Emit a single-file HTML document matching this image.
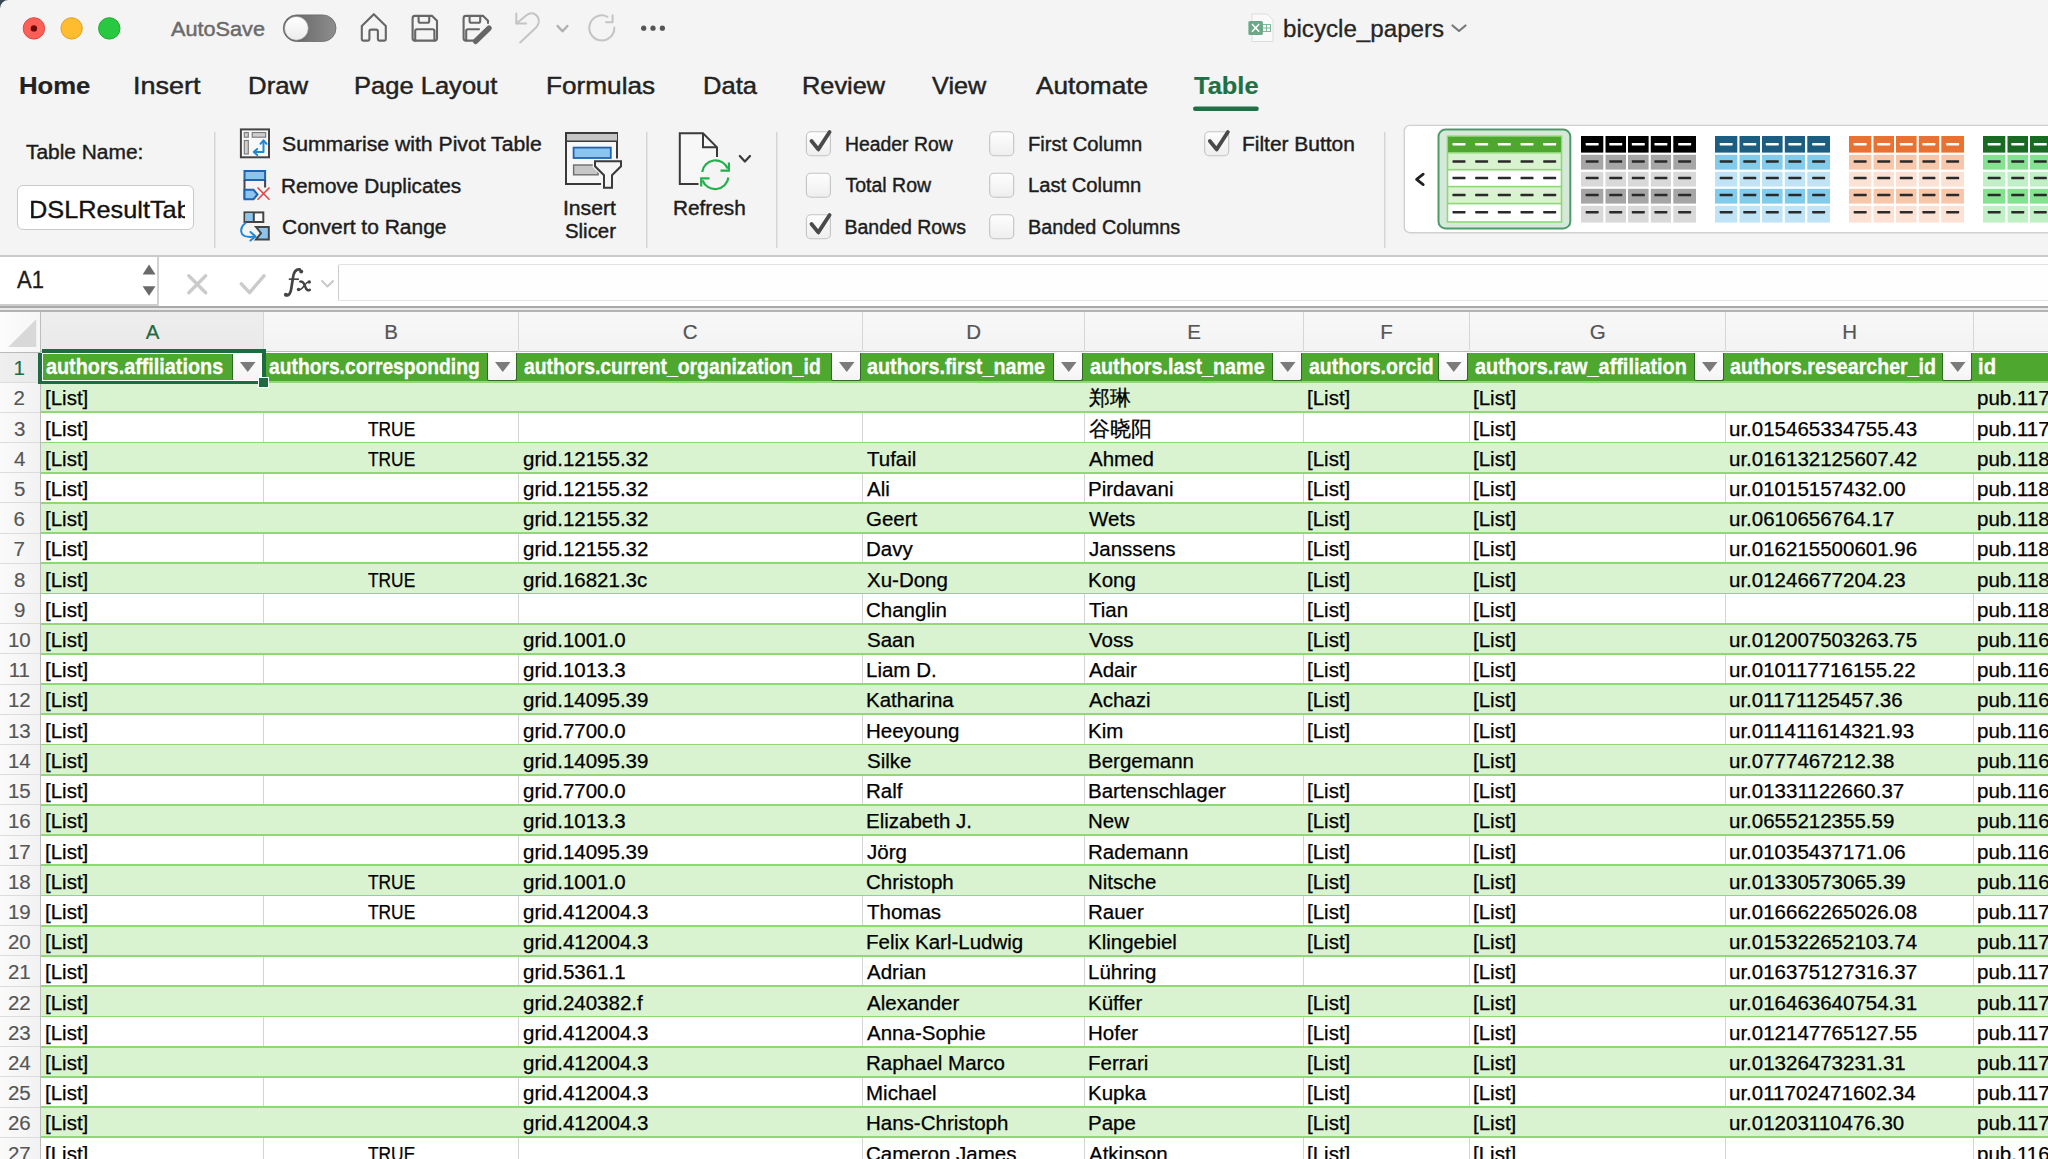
<!DOCTYPE html><html><head><meta charset="utf-8"><style>
*{margin:0;padding:0;box-sizing:border-box}
html,body{width:2048px;height:1159px;overflow:hidden;background:#f4f4f4;font-family:"Liberation Sans",sans-serif;}
.a{position:absolute}
.t{position:absolute;white-space:nowrap;line-height:1;transform-origin:0 0}
</style></head><body>

<div class="a" style="left:0;top:255px;width:2048px;height:2px;background:#cacaca"></div>
<div class="a" style="left:0;top:257px;width:2048px;height:49px;background:#fff"></div>
<div class="a" style="left:0;top:304px;width:157px;height:2px;background:#cdcdcd"></div>
<div class="a" style="left:157px;top:257px;width:2px;height:49px;background:#d2d2d2"></div>
<div class="a" style="left:0;top:306px;width:2048px;height:1.5px;background:#a9a9a9"></div>
<div class="a" style="left:0;top:307.5px;width:2048px;height:2px;background:#e9e9e9"></div>
<div class="a" style="left:0;top:309.5px;width:2048px;height:2px;background:#b3b3b3"></div>
<div class="a" style="left:338.2px;top:263.5px;width:1720px;height:37.5px;border-top:1px solid #e2e2e2;border-bottom:1px solid #e2e2e2;border-left:1.6px solid #cdcdcd;border-radius:2px 0 0 2px;background:#fefefe"></div>
<div class="a" style="left:0;top:311.5px;width:2048px;height:40px;background:linear-gradient(#f8f8f8,#f3f3f3)"></div>
<div class="a" style="left:41px;top:311.5px;width:222px;height:40px;background:linear-gradient(#eeeeee,#e9e9e9)"></div>
<div class="a" style="left:0;top:351.2px;width:2048px;height:1.6px;background:#bababa"></div>
<div class="a" style="left:41px;top:352px;width:2007px;height:807px;background:#fff"></div>
<div class="a" style="left:0;top:311.5px;width:40px;height:40px;background:linear-gradient(90deg,#fcfcfc,#f6f6f6)"></div>
<div class="a" style="left:0;top:352.8px;width:40px;height:807px;background:linear-gradient(90deg,#fafafa,#f2f2f2)"></div>
<div class="a" style="left:0;top:352.8px;width:40px;height:29.2px;background:linear-gradient(90deg,#efefef,#e9e9e9)"></div>
<div class="a" style="left:40px;top:311.5px;width:1.2px;height:848px;background:#bdbdbd"></div>
<svg class="a" style="left:0;top:311px" width="40" height="40"><polygon points="8.3,36 36.2,36 36.2,8.3" fill="#d8d8d8"/></svg>
<div class="a" style="left:262.5px;top:311.5px;width:1px;height:40px;background:#d6d6d6"></div>
<div class="a" style="left:517.5px;top:311.5px;width:1px;height:40px;background:#d6d6d6"></div>
<div class="a" style="left:861.5px;top:311.5px;width:1px;height:40px;background:#d6d6d6"></div>
<div class="a" style="left:1083.5px;top:311.5px;width:1px;height:40px;background:#d6d6d6"></div>
<div class="a" style="left:1302.5px;top:311.5px;width:1px;height:40px;background:#d6d6d6"></div>
<div class="a" style="left:1468.5px;top:311.5px;width:1px;height:40px;background:#d6d6d6"></div>
<div class="a" style="left:1724.5px;top:311.5px;width:1px;height:40px;background:#d6d6d6"></div>
<div class="a" style="left:1972.5px;top:311.5px;width:1px;height:40px;background:#d6d6d6"></div>
<div class="a" style="left:41px;top:382.00px;width:2007px;height:30.21px;background:#d9f2d0"></div>
<div class="a" style="left:262.5px;top:412.21px;width:1px;height:30.21px;background:#d4d4d4"></div>
<div class="a" style="left:517.5px;top:412.21px;width:1px;height:30.21px;background:#d4d4d4"></div>
<div class="a" style="left:861.5px;top:412.21px;width:1px;height:30.21px;background:#d4d4d4"></div>
<div class="a" style="left:1083.5px;top:412.21px;width:1px;height:30.21px;background:#d4d4d4"></div>
<div class="a" style="left:1302.5px;top:412.21px;width:1px;height:30.21px;background:#d4d4d4"></div>
<div class="a" style="left:1468.5px;top:412.21px;width:1px;height:30.21px;background:#d4d4d4"></div>
<div class="a" style="left:1724.5px;top:412.21px;width:1px;height:30.21px;background:#d4d4d4"></div>
<div class="a" style="left:1972.5px;top:412.21px;width:1px;height:30.21px;background:#d4d4d4"></div>
<div class="a" style="left:41px;top:442.42px;width:2007px;height:30.21px;background:#d9f2d0"></div>
<div class="a" style="left:262.5px;top:472.63px;width:1px;height:30.21px;background:#d4d4d4"></div>
<div class="a" style="left:517.5px;top:472.63px;width:1px;height:30.21px;background:#d4d4d4"></div>
<div class="a" style="left:861.5px;top:472.63px;width:1px;height:30.21px;background:#d4d4d4"></div>
<div class="a" style="left:1083.5px;top:472.63px;width:1px;height:30.21px;background:#d4d4d4"></div>
<div class="a" style="left:1302.5px;top:472.63px;width:1px;height:30.21px;background:#d4d4d4"></div>
<div class="a" style="left:1468.5px;top:472.63px;width:1px;height:30.21px;background:#d4d4d4"></div>
<div class="a" style="left:1724.5px;top:472.63px;width:1px;height:30.21px;background:#d4d4d4"></div>
<div class="a" style="left:1972.5px;top:472.63px;width:1px;height:30.21px;background:#d4d4d4"></div>
<div class="a" style="left:41px;top:502.84px;width:2007px;height:30.21px;background:#d9f2d0"></div>
<div class="a" style="left:262.5px;top:533.05px;width:1px;height:30.21px;background:#d4d4d4"></div>
<div class="a" style="left:517.5px;top:533.05px;width:1px;height:30.21px;background:#d4d4d4"></div>
<div class="a" style="left:861.5px;top:533.05px;width:1px;height:30.21px;background:#d4d4d4"></div>
<div class="a" style="left:1083.5px;top:533.05px;width:1px;height:30.21px;background:#d4d4d4"></div>
<div class="a" style="left:1302.5px;top:533.05px;width:1px;height:30.21px;background:#d4d4d4"></div>
<div class="a" style="left:1468.5px;top:533.05px;width:1px;height:30.21px;background:#d4d4d4"></div>
<div class="a" style="left:1724.5px;top:533.05px;width:1px;height:30.21px;background:#d4d4d4"></div>
<div class="a" style="left:1972.5px;top:533.05px;width:1px;height:30.21px;background:#d4d4d4"></div>
<div class="a" style="left:41px;top:563.26px;width:2007px;height:30.21px;background:#d9f2d0"></div>
<div class="a" style="left:262.5px;top:593.47px;width:1px;height:30.21px;background:#d4d4d4"></div>
<div class="a" style="left:517.5px;top:593.47px;width:1px;height:30.21px;background:#d4d4d4"></div>
<div class="a" style="left:861.5px;top:593.47px;width:1px;height:30.21px;background:#d4d4d4"></div>
<div class="a" style="left:1083.5px;top:593.47px;width:1px;height:30.21px;background:#d4d4d4"></div>
<div class="a" style="left:1302.5px;top:593.47px;width:1px;height:30.21px;background:#d4d4d4"></div>
<div class="a" style="left:1468.5px;top:593.47px;width:1px;height:30.21px;background:#d4d4d4"></div>
<div class="a" style="left:1724.5px;top:593.47px;width:1px;height:30.21px;background:#d4d4d4"></div>
<div class="a" style="left:1972.5px;top:593.47px;width:1px;height:30.21px;background:#d4d4d4"></div>
<div class="a" style="left:41px;top:623.68px;width:2007px;height:30.21px;background:#d9f2d0"></div>
<div class="a" style="left:262.5px;top:653.89px;width:1px;height:30.21px;background:#d4d4d4"></div>
<div class="a" style="left:517.5px;top:653.89px;width:1px;height:30.21px;background:#d4d4d4"></div>
<div class="a" style="left:861.5px;top:653.89px;width:1px;height:30.21px;background:#d4d4d4"></div>
<div class="a" style="left:1083.5px;top:653.89px;width:1px;height:30.21px;background:#d4d4d4"></div>
<div class="a" style="left:1302.5px;top:653.89px;width:1px;height:30.21px;background:#d4d4d4"></div>
<div class="a" style="left:1468.5px;top:653.89px;width:1px;height:30.21px;background:#d4d4d4"></div>
<div class="a" style="left:1724.5px;top:653.89px;width:1px;height:30.21px;background:#d4d4d4"></div>
<div class="a" style="left:1972.5px;top:653.89px;width:1px;height:30.21px;background:#d4d4d4"></div>
<div class="a" style="left:41px;top:684.10px;width:2007px;height:30.21px;background:#d9f2d0"></div>
<div class="a" style="left:262.5px;top:714.31px;width:1px;height:30.21px;background:#d4d4d4"></div>
<div class="a" style="left:517.5px;top:714.31px;width:1px;height:30.21px;background:#d4d4d4"></div>
<div class="a" style="left:861.5px;top:714.31px;width:1px;height:30.21px;background:#d4d4d4"></div>
<div class="a" style="left:1083.5px;top:714.31px;width:1px;height:30.21px;background:#d4d4d4"></div>
<div class="a" style="left:1302.5px;top:714.31px;width:1px;height:30.21px;background:#d4d4d4"></div>
<div class="a" style="left:1468.5px;top:714.31px;width:1px;height:30.21px;background:#d4d4d4"></div>
<div class="a" style="left:1724.5px;top:714.31px;width:1px;height:30.21px;background:#d4d4d4"></div>
<div class="a" style="left:1972.5px;top:714.31px;width:1px;height:30.21px;background:#d4d4d4"></div>
<div class="a" style="left:41px;top:744.52px;width:2007px;height:30.21px;background:#d9f2d0"></div>
<div class="a" style="left:262.5px;top:774.73px;width:1px;height:30.21px;background:#d4d4d4"></div>
<div class="a" style="left:517.5px;top:774.73px;width:1px;height:30.21px;background:#d4d4d4"></div>
<div class="a" style="left:861.5px;top:774.73px;width:1px;height:30.21px;background:#d4d4d4"></div>
<div class="a" style="left:1083.5px;top:774.73px;width:1px;height:30.21px;background:#d4d4d4"></div>
<div class="a" style="left:1302.5px;top:774.73px;width:1px;height:30.21px;background:#d4d4d4"></div>
<div class="a" style="left:1468.5px;top:774.73px;width:1px;height:30.21px;background:#d4d4d4"></div>
<div class="a" style="left:1724.5px;top:774.73px;width:1px;height:30.21px;background:#d4d4d4"></div>
<div class="a" style="left:1972.5px;top:774.73px;width:1px;height:30.21px;background:#d4d4d4"></div>
<div class="a" style="left:41px;top:804.94px;width:2007px;height:30.21px;background:#d9f2d0"></div>
<div class="a" style="left:262.5px;top:835.15px;width:1px;height:30.21px;background:#d4d4d4"></div>
<div class="a" style="left:517.5px;top:835.15px;width:1px;height:30.21px;background:#d4d4d4"></div>
<div class="a" style="left:861.5px;top:835.15px;width:1px;height:30.21px;background:#d4d4d4"></div>
<div class="a" style="left:1083.5px;top:835.15px;width:1px;height:30.21px;background:#d4d4d4"></div>
<div class="a" style="left:1302.5px;top:835.15px;width:1px;height:30.21px;background:#d4d4d4"></div>
<div class="a" style="left:1468.5px;top:835.15px;width:1px;height:30.21px;background:#d4d4d4"></div>
<div class="a" style="left:1724.5px;top:835.15px;width:1px;height:30.21px;background:#d4d4d4"></div>
<div class="a" style="left:1972.5px;top:835.15px;width:1px;height:30.21px;background:#d4d4d4"></div>
<div class="a" style="left:41px;top:865.36px;width:2007px;height:30.21px;background:#d9f2d0"></div>
<div class="a" style="left:262.5px;top:895.57px;width:1px;height:30.21px;background:#d4d4d4"></div>
<div class="a" style="left:517.5px;top:895.57px;width:1px;height:30.21px;background:#d4d4d4"></div>
<div class="a" style="left:861.5px;top:895.57px;width:1px;height:30.21px;background:#d4d4d4"></div>
<div class="a" style="left:1083.5px;top:895.57px;width:1px;height:30.21px;background:#d4d4d4"></div>
<div class="a" style="left:1302.5px;top:895.57px;width:1px;height:30.21px;background:#d4d4d4"></div>
<div class="a" style="left:1468.5px;top:895.57px;width:1px;height:30.21px;background:#d4d4d4"></div>
<div class="a" style="left:1724.5px;top:895.57px;width:1px;height:30.21px;background:#d4d4d4"></div>
<div class="a" style="left:1972.5px;top:895.57px;width:1px;height:30.21px;background:#d4d4d4"></div>
<div class="a" style="left:41px;top:925.78px;width:2007px;height:30.21px;background:#d9f2d0"></div>
<div class="a" style="left:262.5px;top:955.99px;width:1px;height:30.21px;background:#d4d4d4"></div>
<div class="a" style="left:517.5px;top:955.99px;width:1px;height:30.21px;background:#d4d4d4"></div>
<div class="a" style="left:861.5px;top:955.99px;width:1px;height:30.21px;background:#d4d4d4"></div>
<div class="a" style="left:1083.5px;top:955.99px;width:1px;height:30.21px;background:#d4d4d4"></div>
<div class="a" style="left:1302.5px;top:955.99px;width:1px;height:30.21px;background:#d4d4d4"></div>
<div class="a" style="left:1468.5px;top:955.99px;width:1px;height:30.21px;background:#d4d4d4"></div>
<div class="a" style="left:1724.5px;top:955.99px;width:1px;height:30.21px;background:#d4d4d4"></div>
<div class="a" style="left:1972.5px;top:955.99px;width:1px;height:30.21px;background:#d4d4d4"></div>
<div class="a" style="left:41px;top:986.20px;width:2007px;height:30.21px;background:#d9f2d0"></div>
<div class="a" style="left:262.5px;top:1016.41px;width:1px;height:30.21px;background:#d4d4d4"></div>
<div class="a" style="left:517.5px;top:1016.41px;width:1px;height:30.21px;background:#d4d4d4"></div>
<div class="a" style="left:861.5px;top:1016.41px;width:1px;height:30.21px;background:#d4d4d4"></div>
<div class="a" style="left:1083.5px;top:1016.41px;width:1px;height:30.21px;background:#d4d4d4"></div>
<div class="a" style="left:1302.5px;top:1016.41px;width:1px;height:30.21px;background:#d4d4d4"></div>
<div class="a" style="left:1468.5px;top:1016.41px;width:1px;height:30.21px;background:#d4d4d4"></div>
<div class="a" style="left:1724.5px;top:1016.41px;width:1px;height:30.21px;background:#d4d4d4"></div>
<div class="a" style="left:1972.5px;top:1016.41px;width:1px;height:30.21px;background:#d4d4d4"></div>
<div class="a" style="left:41px;top:1046.62px;width:2007px;height:30.21px;background:#d9f2d0"></div>
<div class="a" style="left:262.5px;top:1076.83px;width:1px;height:30.21px;background:#d4d4d4"></div>
<div class="a" style="left:517.5px;top:1076.83px;width:1px;height:30.21px;background:#d4d4d4"></div>
<div class="a" style="left:861.5px;top:1076.83px;width:1px;height:30.21px;background:#d4d4d4"></div>
<div class="a" style="left:1083.5px;top:1076.83px;width:1px;height:30.21px;background:#d4d4d4"></div>
<div class="a" style="left:1302.5px;top:1076.83px;width:1px;height:30.21px;background:#d4d4d4"></div>
<div class="a" style="left:1468.5px;top:1076.83px;width:1px;height:30.21px;background:#d4d4d4"></div>
<div class="a" style="left:1724.5px;top:1076.83px;width:1px;height:30.21px;background:#d4d4d4"></div>
<div class="a" style="left:1972.5px;top:1076.83px;width:1px;height:30.21px;background:#d4d4d4"></div>
<div class="a" style="left:41px;top:1107.04px;width:2007px;height:30.21px;background:#d9f2d0"></div>
<div class="a" style="left:262.5px;top:1137.25px;width:1px;height:30.21px;background:#d4d4d4"></div>
<div class="a" style="left:517.5px;top:1137.25px;width:1px;height:30.21px;background:#d4d4d4"></div>
<div class="a" style="left:861.5px;top:1137.25px;width:1px;height:30.21px;background:#d4d4d4"></div>
<div class="a" style="left:1083.5px;top:1137.25px;width:1px;height:30.21px;background:#d4d4d4"></div>
<div class="a" style="left:1302.5px;top:1137.25px;width:1px;height:30.21px;background:#d4d4d4"></div>
<div class="a" style="left:1468.5px;top:1137.25px;width:1px;height:30.21px;background:#d4d4d4"></div>
<div class="a" style="left:1724.5px;top:1137.25px;width:1px;height:30.21px;background:#d4d4d4"></div>
<div class="a" style="left:1972.5px;top:1137.25px;width:1px;height:30.21px;background:#d4d4d4"></div>
<div class="a" style="left:41px;top:411.31px;width:2007px;height:1.8px;background:#8ed973"></div>
<div class="a" style="left:0;top:411.71px;width:40px;height:1px;background:#dcdcdc"></div>
<div class="a" style="left:41px;top:441.52px;width:2007px;height:1.8px;background:#8ed973"></div>
<div class="a" style="left:0;top:441.92px;width:40px;height:1px;background:#dcdcdc"></div>
<div class="a" style="left:41px;top:471.73px;width:2007px;height:1.8px;background:#8ed973"></div>
<div class="a" style="left:0;top:472.13px;width:40px;height:1px;background:#dcdcdc"></div>
<div class="a" style="left:41px;top:501.94px;width:2007px;height:1.8px;background:#8ed973"></div>
<div class="a" style="left:0;top:502.34px;width:40px;height:1px;background:#dcdcdc"></div>
<div class="a" style="left:41px;top:532.15px;width:2007px;height:1.8px;background:#8ed973"></div>
<div class="a" style="left:0;top:532.55px;width:40px;height:1px;background:#dcdcdc"></div>
<div class="a" style="left:41px;top:562.36px;width:2007px;height:1.8px;background:#8ed973"></div>
<div class="a" style="left:0;top:562.76px;width:40px;height:1px;background:#dcdcdc"></div>
<div class="a" style="left:41px;top:592.57px;width:2007px;height:1.8px;background:#8ed973"></div>
<div class="a" style="left:0;top:592.97px;width:40px;height:1px;background:#dcdcdc"></div>
<div class="a" style="left:41px;top:622.78px;width:2007px;height:1.8px;background:#8ed973"></div>
<div class="a" style="left:0;top:623.18px;width:40px;height:1px;background:#dcdcdc"></div>
<div class="a" style="left:41px;top:652.99px;width:2007px;height:1.8px;background:#8ed973"></div>
<div class="a" style="left:0;top:653.39px;width:40px;height:1px;background:#dcdcdc"></div>
<div class="a" style="left:41px;top:683.20px;width:2007px;height:1.8px;background:#8ed973"></div>
<div class="a" style="left:0;top:683.60px;width:40px;height:1px;background:#dcdcdc"></div>
<div class="a" style="left:41px;top:713.41px;width:2007px;height:1.8px;background:#8ed973"></div>
<div class="a" style="left:0;top:713.81px;width:40px;height:1px;background:#dcdcdc"></div>
<div class="a" style="left:41px;top:743.62px;width:2007px;height:1.8px;background:#8ed973"></div>
<div class="a" style="left:0;top:744.02px;width:40px;height:1px;background:#dcdcdc"></div>
<div class="a" style="left:41px;top:773.83px;width:2007px;height:1.8px;background:#8ed973"></div>
<div class="a" style="left:0;top:774.23px;width:40px;height:1px;background:#dcdcdc"></div>
<div class="a" style="left:41px;top:804.04px;width:2007px;height:1.8px;background:#8ed973"></div>
<div class="a" style="left:0;top:804.44px;width:40px;height:1px;background:#dcdcdc"></div>
<div class="a" style="left:41px;top:834.25px;width:2007px;height:1.8px;background:#8ed973"></div>
<div class="a" style="left:0;top:834.65px;width:40px;height:1px;background:#dcdcdc"></div>
<div class="a" style="left:41px;top:864.46px;width:2007px;height:1.8px;background:#8ed973"></div>
<div class="a" style="left:0;top:864.86px;width:40px;height:1px;background:#dcdcdc"></div>
<div class="a" style="left:41px;top:894.67px;width:2007px;height:1.8px;background:#8ed973"></div>
<div class="a" style="left:0;top:895.07px;width:40px;height:1px;background:#dcdcdc"></div>
<div class="a" style="left:41px;top:924.88px;width:2007px;height:1.8px;background:#8ed973"></div>
<div class="a" style="left:0;top:925.28px;width:40px;height:1px;background:#dcdcdc"></div>
<div class="a" style="left:41px;top:955.09px;width:2007px;height:1.8px;background:#8ed973"></div>
<div class="a" style="left:0;top:955.49px;width:40px;height:1px;background:#dcdcdc"></div>
<div class="a" style="left:41px;top:985.30px;width:2007px;height:1.8px;background:#8ed973"></div>
<div class="a" style="left:0;top:985.70px;width:40px;height:1px;background:#dcdcdc"></div>
<div class="a" style="left:41px;top:1015.51px;width:2007px;height:1.8px;background:#8ed973"></div>
<div class="a" style="left:0;top:1015.91px;width:40px;height:1px;background:#dcdcdc"></div>
<div class="a" style="left:41px;top:1045.72px;width:2007px;height:1.8px;background:#8ed973"></div>
<div class="a" style="left:0;top:1046.12px;width:40px;height:1px;background:#dcdcdc"></div>
<div class="a" style="left:41px;top:1075.93px;width:2007px;height:1.8px;background:#8ed973"></div>
<div class="a" style="left:0;top:1076.33px;width:40px;height:1px;background:#dcdcdc"></div>
<div class="a" style="left:41px;top:1106.14px;width:2007px;height:1.8px;background:#8ed973"></div>
<div class="a" style="left:0;top:1106.54px;width:40px;height:1px;background:#dcdcdc"></div>
<div class="a" style="left:41px;top:1136.35px;width:2007px;height:1.8px;background:#8ed973"></div>
<div class="a" style="left:0;top:1136.75px;width:40px;height:1px;background:#dcdcdc"></div>
<div class="a" style="left:41px;top:1166.56px;width:2007px;height:1.8px;background:#8ed973"></div>
<div class="a" style="left:0;top:1166.96px;width:40px;height:1px;background:#dcdcdc"></div>
<div class="a" style="left:41px;top:352.8px;width:2007px;height:28.2px;background:#4ea72e"></div>
<div class="a" style="left:41px;top:380.5px;width:2007px;height:2px;background:#8ed973"></div>
<div class="a" style="left:0;top:381.5px;width:40px;height:1px;background:#dcdcdc"></div>
<div class="a" style="left:232.2px;top:352.8px;width:29.6px;height:28px;background:linear-gradient(#fff,#f4f4f4);border:1.7px solid #2e6a24;border-top:none;border-radius:0 0 2.5px 2.5px"></div>
<svg class="a" style="left:239.5px;top:362px" width="16" height="11"><polygon points="0,0 15.5,0 7.75,10" fill="#7b7b7b"/></svg>
<div class="a" style="left:487.2px;top:352.8px;width:29.6px;height:28px;background:linear-gradient(#fff,#f4f4f4);border:1.7px solid #2e6a24;border-top:none;border-radius:0 0 2.5px 2.5px"></div>
<svg class="a" style="left:494.5px;top:362px" width="16" height="11"><polygon points="0,0 15.5,0 7.75,10" fill="#7b7b7b"/></svg>
<div class="a" style="left:831.2px;top:352.8px;width:29.6px;height:28px;background:linear-gradient(#fff,#f4f4f4);border:1.7px solid #2e6a24;border-top:none;border-radius:0 0 2.5px 2.5px"></div>
<svg class="a" style="left:838.5px;top:362px" width="16" height="11"><polygon points="0,0 15.5,0 7.75,10" fill="#7b7b7b"/></svg>
<div class="a" style="left:1053.2px;top:352.8px;width:29.6px;height:28px;background:linear-gradient(#fff,#f4f4f4);border:1.7px solid #2e6a24;border-top:none;border-radius:0 0 2.5px 2.5px"></div>
<svg class="a" style="left:1060.5px;top:362px" width="16" height="11"><polygon points="0,0 15.5,0 7.75,10" fill="#7b7b7b"/></svg>
<div class="a" style="left:1272.2px;top:352.8px;width:29.6px;height:28px;background:linear-gradient(#fff,#f4f4f4);border:1.7px solid #2e6a24;border-top:none;border-radius:0 0 2.5px 2.5px"></div>
<svg class="a" style="left:1279.5px;top:362px" width="16" height="11"><polygon points="0,0 15.5,0 7.75,10" fill="#7b7b7b"/></svg>
<div class="a" style="left:1438.2px;top:352.8px;width:29.6px;height:28px;background:linear-gradient(#fff,#f4f4f4);border:1.7px solid #2e6a24;border-top:none;border-radius:0 0 2.5px 2.5px"></div>
<svg class="a" style="left:1445.5px;top:362px" width="16" height="11"><polygon points="0,0 15.5,0 7.75,10" fill="#7b7b7b"/></svg>
<div class="a" style="left:1694.2px;top:352.8px;width:29.6px;height:28px;background:linear-gradient(#fff,#f4f4f4);border:1.7px solid #2e6a24;border-top:none;border-radius:0 0 2.5px 2.5px"></div>
<svg class="a" style="left:1701.5px;top:362px" width="16" height="11"><polygon points="0,0 15.5,0 7.75,10" fill="#7b7b7b"/></svg>
<div class="a" style="left:1942.2px;top:352.8px;width:29.6px;height:28px;background:linear-gradient(#fff,#f4f4f4);border:1.7px solid #2e6a24;border-top:none;border-radius:0 0 2.5px 2.5px"></div>
<svg class="a" style="left:1949.5px;top:362px" width="16" height="11"><polygon points="0,0 15.5,0 7.75,10" fill="#7b7b7b"/></svg>
<!--TEXTS-->
<div class="t" style="left:170.60px;top:18.97px;font-size:20px;color:#6a6a6a;-webkit-text-stroke:0.45px #6a6a6a;transform:scaleX(1.0831);">AutoSave</div>
<div class="t" style="left:1283.35px;top:17.53px;font-size:23px;color:#262626;-webkit-text-stroke:0.3px #262626;transform:scaleX(1.0506);">bicycle_papers</div>
<div class="t" style="left:18.75px;top:73.76px;font-size:24.5px;font-weight:bold;color:#222;-webkit-text-stroke:0.2px #222;transform:scaleX(1.0490);">Home</div>
<div class="t" style="left:132.79px;top:73.76px;font-size:24.5px;color:#222;-webkit-text-stroke:0.45px #222;transform:scaleX(1.1031);">Insert</div>
<div class="t" style="left:248.09px;top:73.76px;font-size:24.5px;color:#222;-webkit-text-stroke:0.45px #222;transform:scaleX(1.0527);">Draw</div>
<div class="t" style="left:354.42px;top:73.76px;font-size:24.5px;color:#222;-webkit-text-stroke:0.45px #222;transform:scaleX(1.0421);">Page Layout</div>
<div class="t" style="left:546.36px;top:73.76px;font-size:24.5px;color:#222;-webkit-text-stroke:0.45px #222;transform:scaleX(1.0686);">Formulas</div>
<div class="t" style="left:703.01px;top:73.76px;font-size:24.5px;color:#222;-webkit-text-stroke:0.45px #222;transform:scaleX(1.0434);">Data</div>
<div class="t" style="left:801.53px;top:73.76px;font-size:24.5px;color:#222;-webkit-text-stroke:0.45px #222;transform:scaleX(1.0339);">Review</div>
<div class="t" style="left:932.40px;top:73.76px;font-size:24.5px;color:#222;-webkit-text-stroke:0.45px #222;transform:scaleX(1.0308);">View</div>
<div class="t" style="left:1035.60px;top:73.76px;font-size:24.5px;color:#222;-webkit-text-stroke:0.45px #222;transform:scaleX(1.0687);">Automate</div>
<div class="t" style="left:1193.90px;top:73.76px;font-size:24.5px;font-weight:bold;color:#1e7145;-webkit-text-stroke:0.2px #1e7145;transform:scaleX(1.0383);">Table</div>
<div class="t" style="left:25.50px;top:141.77px;font-size:20px;color:#1c1c1c;-webkit-text-stroke:0.4px #1c1c1c;transform:scaleX(1.0450);">Table Name:</div>
<div class="t" style="left:282.00px;top:134.99px;font-size:19.5px;color:#1c1c1c;-webkit-text-stroke:0.4px #1c1c1c;transform:scaleX(1.0861);">Summarise with Pivot Table</div>
<div class="t" style="left:281.43px;top:176.79px;font-size:19.5px;color:#1c1c1c;-webkit-text-stroke:0.4px #1c1c1c;transform:scaleX(1.0658);">Remove Duplicates</div>
<div class="t" style="left:282.00px;top:218.09px;font-size:19.5px;color:#1c1c1c;-webkit-text-stroke:0.4px #1c1c1c;transform:scaleX(1.0764);">Convert to Range</div>
<div class="t" style="left:563.12px;top:199.09px;font-size:19.5px;color:#1c1c1c;-webkit-text-stroke:0.4px #1c1c1c;transform:scaleX(1.0837);">Insert</div>
<div class="t" style="left:564.80px;top:221.59px;font-size:19.5px;color:#1c1c1c;-webkit-text-stroke:0.4px #1c1c1c;transform:scaleX(1.0453);">Slicer</div>
<div class="t" style="left:672.83px;top:199.09px;font-size:19.5px;color:#1c1c1c;-webkit-text-stroke:0.4px #1c1c1c;transform:scaleX(1.0657);">Refresh</div>
<div class="t" style="left:844.51px;top:134.59px;font-size:19.5px;color:#1c1c1c;-webkit-text-stroke:0.4px #1c1c1c;transform:scaleX(0.9935);">Header Row</div>
<div class="t" style="left:845.50px;top:176.39px;font-size:19.5px;color:#1c1c1c;-webkit-text-stroke:0.4px #1c1c1c;">Total Row</div>
<div class="t" style="left:844.50px;top:217.89px;font-size:19.5px;color:#1c1c1c;-webkit-text-stroke:0.4px #1c1c1c;">Banded Rows</div>
<div class="t" style="left:1027.57px;top:134.59px;font-size:19.5px;color:#1c1c1c;-webkit-text-stroke:0.4px #1c1c1c;transform:scaleX(1.0343);">First Column</div>
<div class="t" style="left:1027.56px;top:176.39px;font-size:19.5px;color:#1c1c1c;-webkit-text-stroke:0.4px #1c1c1c;transform:scaleX(1.0351);">Last Column</div>
<div class="t" style="left:1027.58px;top:217.89px;font-size:19.5px;color:#1c1c1c;-webkit-text-stroke:0.4px #1c1c1c;transform:scaleX(1.0172);">Banded Columns</div>
<div class="t" style="left:1242.43px;top:134.59px;font-size:19.5px;color:#1c1c1c;-webkit-text-stroke:0.4px #1c1c1c;transform:scaleX(1.0728);">Filter Button</div>
<div class="t" style="left:17.10px;top:269.33px;font-size:23px;color:#1c1c1c;-webkit-text-stroke:0.3px #1c1c1c;transform:scaleX(0.9546);">A1</div>
<div class="t" style="left:145.80px;top:322.35px;font-size:20.5px;color:#1d6b41;-webkit-text-stroke:0.2px #1d6b41;">A</div>
<div class="t" style="left:384.30px;top:322.35px;font-size:20.5px;color:#555;-webkit-text-stroke:0.2px #555;">B</div>
<div class="t" style="left:682.80px;top:322.35px;font-size:20.5px;color:#555;-webkit-text-stroke:0.2px #555;">C</div>
<div class="t" style="left:966.30px;top:322.35px;font-size:20.5px;color:#555;-webkit-text-stroke:0.2px #555;">D</div>
<div class="t" style="left:1187.30px;top:322.35px;font-size:20.5px;color:#555;-webkit-text-stroke:0.2px #555;">E</div>
<div class="t" style="left:1380.30px;top:322.35px;font-size:20.5px;color:#555;-webkit-text-stroke:0.2px #555;">F</div>
<div class="t" style="left:1589.80px;top:322.35px;font-size:20.5px;color:#555;-webkit-text-stroke:0.2px #555;">G</div>
<div class="t" style="left:1842.30px;top:322.35px;font-size:20.5px;color:#555;-webkit-text-stroke:0.2px #555;">H</div>
<div class="t" style="left:13.60px;top:357.95px;font-size:20.5px;color:#1d6b41;-webkit-text-stroke:0.15px #1d6b41;">1</div>
<div class="t" style="left:13.60px;top:388.35px;font-size:20.5px;color:#555;-webkit-text-stroke:0.15px #555;">2</div>
<div class="t" style="left:14.10px;top:418.56px;font-size:20.5px;color:#555;-webkit-text-stroke:0.15px #555;">3</div>
<div class="t" style="left:14.10px;top:448.77px;font-size:20.5px;color:#555;-webkit-text-stroke:0.15px #555;">4</div>
<div class="t" style="left:14.10px;top:478.98px;font-size:20.5px;color:#555;-webkit-text-stroke:0.15px #555;">5</div>
<div class="t" style="left:13.60px;top:509.19px;font-size:20.5px;color:#555;-webkit-text-stroke:0.15px #555;">6</div>
<div class="t" style="left:13.60px;top:539.40px;font-size:20.5px;color:#555;-webkit-text-stroke:0.15px #555;">7</div>
<div class="t" style="left:14.10px;top:569.61px;font-size:20.5px;color:#555;-webkit-text-stroke:0.15px #555;">8</div>
<div class="t" style="left:14.10px;top:599.82px;font-size:20.5px;color:#555;-webkit-text-stroke:0.15px #555;">9</div>
<div class="t" style="left:7.90px;top:630.03px;font-size:20.5px;color:#555;-webkit-text-stroke:0.15px #555;">10</div>
<div class="t" style="left:8.66px;top:660.24px;font-size:20.5px;color:#555;-webkit-text-stroke:0.15px #555;">11</div>
<div class="t" style="left:7.90px;top:690.45px;font-size:20.5px;color:#555;-webkit-text-stroke:0.15px #555;">12</div>
<div class="t" style="left:7.90px;top:720.66px;font-size:20.5px;color:#555;-webkit-text-stroke:0.15px #555;">13</div>
<div class="t" style="left:7.90px;top:750.87px;font-size:20.5px;color:#555;-webkit-text-stroke:0.15px #555;">14</div>
<div class="t" style="left:7.90px;top:781.08px;font-size:20.5px;color:#555;-webkit-text-stroke:0.15px #555;">15</div>
<div class="t" style="left:7.90px;top:811.29px;font-size:20.5px;color:#555;-webkit-text-stroke:0.15px #555;">16</div>
<div class="t" style="left:7.90px;top:841.50px;font-size:20.5px;color:#555;-webkit-text-stroke:0.15px #555;">17</div>
<div class="t" style="left:7.90px;top:871.71px;font-size:20.5px;color:#555;-webkit-text-stroke:0.15px #555;">18</div>
<div class="t" style="left:7.90px;top:901.92px;font-size:20.5px;color:#555;-webkit-text-stroke:0.15px #555;">19</div>
<div class="t" style="left:7.90px;top:932.13px;font-size:20.5px;color:#555;-webkit-text-stroke:0.15px #555;">20</div>
<div class="t" style="left:7.90px;top:962.34px;font-size:20.5px;color:#555;-webkit-text-stroke:0.15px #555;">21</div>
<div class="t" style="left:7.90px;top:992.55px;font-size:20.5px;color:#555;-webkit-text-stroke:0.15px #555;">22</div>
<div class="t" style="left:7.90px;top:1022.76px;font-size:20.5px;color:#555;-webkit-text-stroke:0.15px #555;">23</div>
<div class="t" style="left:7.90px;top:1052.97px;font-size:20.5px;color:#555;-webkit-text-stroke:0.15px #555;">24</div>
<div class="t" style="left:7.90px;top:1083.18px;font-size:20.5px;color:#555;-webkit-text-stroke:0.15px #555;">25</div>
<div class="t" style="left:7.90px;top:1113.39px;font-size:20.5px;color:#555;-webkit-text-stroke:0.15px #555;">26</div>
<div class="t" style="left:7.90px;top:1143.60px;font-size:20.5px;color:#555;-webkit-text-stroke:0.15px #555;">27</div>
<div class="t" style="left:45.90px;top:357.20px;font-size:21.5px;font-weight:bold;color:#fff;-webkit-text-stroke:0.3px #fff;transform:scaleX(0.9212);">authors.affiliations</div>
<div class="t" style="left:268.90px;top:357.20px;font-size:21.5px;font-weight:bold;color:#fff;-webkit-text-stroke:0.3px #fff;transform:scaleX(0.8954);">authors.corresponding</div>
<div class="t" style="left:523.50px;top:357.20px;font-size:21.5px;font-weight:bold;color:#fff;-webkit-text-stroke:0.3px #fff;transform:scaleX(0.8999);">authors.current_organization_id</div>
<div class="t" style="left:867.00px;top:357.20px;font-size:21.5px;font-weight:bold;color:#fff;-webkit-text-stroke:0.3px #fff;transform:scaleX(0.9200);">authors.first_name</div>
<div class="t" style="left:1089.50px;top:357.20px;font-size:21.5px;font-weight:bold;color:#fff;-webkit-text-stroke:0.3px #fff;transform:scaleX(0.9193);">authors.last_name</div>
<div class="t" style="left:1308.70px;top:357.20px;font-size:21.5px;font-weight:bold;color:#fff;-webkit-text-stroke:0.3px #fff;transform:scaleX(0.9079);">authors.orcid</div>
<div class="t" style="left:1474.50px;top:357.20px;font-size:21.5px;font-weight:bold;color:#fff;-webkit-text-stroke:0.3px #fff;transform:scaleX(0.9236);">authors.raw_affiliation</div>
<div class="t" style="left:1729.60px;top:357.20px;font-size:21.5px;font-weight:bold;color:#fff;-webkit-text-stroke:0.3px #fff;transform:scaleX(0.9122);">authors.researcher_id</div>
<div class="t" style="left:1977.76px;top:357.20px;font-size:21.5px;font-weight:bold;color:#fff;-webkit-text-stroke:0.3px #fff;transform:scaleX(0.9427);">id</div>
<div class="t" style="left:45.00px;top:388.35px;font-size:20.5px;color:#000;-webkit-text-stroke:0.25px #000;">[List]</div>
<div class="t" style="left:1089.00px;top:388.35px;font-size:20.5px;color:#000;-webkit-text-stroke:0.25px #000;">郑琳</div>
<div class="t" style="left:1307.00px;top:388.35px;font-size:20.5px;color:#000;-webkit-text-stroke:0.25px #000;">[List]</div>
<div class="t" style="left:1473.00px;top:388.35px;font-size:20.5px;color:#000;-webkit-text-stroke:0.25px #000;">[List]</div>
<div class="t" style="left:1977.00px;top:388.35px;font-size:20.5px;color:#000;-webkit-text-stroke:0.25px #000;">pub.117</div>
<div class="t" style="left:45.00px;top:418.56px;font-size:20.5px;color:#000;-webkit-text-stroke:0.25px #000;">[List]</div>
<div class="t" style="left:368.00px;top:418.56px;font-size:20.5px;color:#000;-webkit-text-stroke:0.25px #000;transform:scaleX(0.8462);">TRUE</div>
<div class="t" style="left:1089.00px;top:418.56px;font-size:20.5px;color:#000;-webkit-text-stroke:0.25px #000;">谷晓阳</div>
<div class="t" style="left:1473.00px;top:418.56px;font-size:20.5px;color:#000;-webkit-text-stroke:0.25px #000;">[List]</div>
<div class="t" style="left:1729.00px;top:418.56px;font-size:20.5px;color:#000;-webkit-text-stroke:0.25px #000;">ur.015465334755.43</div>
<div class="t" style="left:1977.00px;top:418.56px;font-size:20.5px;color:#000;-webkit-text-stroke:0.25px #000;">pub.117</div>
<div class="t" style="left:45.00px;top:448.77px;font-size:20.5px;color:#000;-webkit-text-stroke:0.25px #000;">[List]</div>
<div class="t" style="left:368.00px;top:448.77px;font-size:20.5px;color:#000;-webkit-text-stroke:0.25px #000;transform:scaleX(0.8462);">TRUE</div>
<div class="t" style="left:523.00px;top:448.77px;font-size:20.5px;color:#000;-webkit-text-stroke:0.25px #000;">grid.12155.32</div>
<div class="t" style="left:867.00px;top:448.77px;font-size:20.5px;color:#000;-webkit-text-stroke:0.25px #000;">Tufail</div>
<div class="t" style="left:1089.00px;top:448.77px;font-size:20.5px;color:#000;-webkit-text-stroke:0.25px #000;">Ahmed</div>
<div class="t" style="left:1307.00px;top:448.77px;font-size:20.5px;color:#000;-webkit-text-stroke:0.25px #000;">[List]</div>
<div class="t" style="left:1473.00px;top:448.77px;font-size:20.5px;color:#000;-webkit-text-stroke:0.25px #000;">[List]</div>
<div class="t" style="left:1729.00px;top:448.77px;font-size:20.5px;color:#000;-webkit-text-stroke:0.25px #000;">ur.016132125607.42</div>
<div class="t" style="left:1977.00px;top:448.77px;font-size:20.5px;color:#000;-webkit-text-stroke:0.25px #000;">pub.118</div>
<div class="t" style="left:45.00px;top:478.98px;font-size:20.5px;color:#000;-webkit-text-stroke:0.25px #000;">[List]</div>
<div class="t" style="left:523.00px;top:478.98px;font-size:20.5px;color:#000;-webkit-text-stroke:0.25px #000;">grid.12155.32</div>
<div class="t" style="left:867.00px;top:478.98px;font-size:20.5px;color:#000;-webkit-text-stroke:0.25px #000;">Ali</div>
<div class="t" style="left:1088.00px;top:478.98px;font-size:20.5px;color:#000;-webkit-text-stroke:0.25px #000;">Pirdavani</div>
<div class="t" style="left:1307.00px;top:478.98px;font-size:20.5px;color:#000;-webkit-text-stroke:0.25px #000;">[List]</div>
<div class="t" style="left:1473.00px;top:478.98px;font-size:20.5px;color:#000;-webkit-text-stroke:0.25px #000;">[List]</div>
<div class="t" style="left:1729.00px;top:478.98px;font-size:20.5px;color:#000;-webkit-text-stroke:0.25px #000;">ur.01015157432.00</div>
<div class="t" style="left:1977.00px;top:478.98px;font-size:20.5px;color:#000;-webkit-text-stroke:0.25px #000;">pub.118</div>
<div class="t" style="left:45.00px;top:509.19px;font-size:20.5px;color:#000;-webkit-text-stroke:0.25px #000;">[List]</div>
<div class="t" style="left:523.00px;top:509.19px;font-size:20.5px;color:#000;-webkit-text-stroke:0.25px #000;">grid.12155.32</div>
<div class="t" style="left:866.00px;top:509.19px;font-size:20.5px;color:#000;-webkit-text-stroke:0.25px #000;">Geert</div>
<div class="t" style="left:1089.00px;top:509.19px;font-size:20.5px;color:#000;-webkit-text-stroke:0.25px #000;">Wets</div>
<div class="t" style="left:1307.00px;top:509.19px;font-size:20.5px;color:#000;-webkit-text-stroke:0.25px #000;">[List]</div>
<div class="t" style="left:1473.00px;top:509.19px;font-size:20.5px;color:#000;-webkit-text-stroke:0.25px #000;">[List]</div>
<div class="t" style="left:1729.00px;top:509.19px;font-size:20.5px;color:#000;-webkit-text-stroke:0.25px #000;">ur.0610656764.17</div>
<div class="t" style="left:1977.00px;top:509.19px;font-size:20.5px;color:#000;-webkit-text-stroke:0.25px #000;">pub.118</div>
<div class="t" style="left:45.00px;top:539.40px;font-size:20.5px;color:#000;-webkit-text-stroke:0.25px #000;">[List]</div>
<div class="t" style="left:523.00px;top:539.40px;font-size:20.5px;color:#000;-webkit-text-stroke:0.25px #000;">grid.12155.32</div>
<div class="t" style="left:866.00px;top:539.40px;font-size:20.5px;color:#000;-webkit-text-stroke:0.25px #000;">Davy</div>
<div class="t" style="left:1089.00px;top:539.40px;font-size:20.5px;color:#000;-webkit-text-stroke:0.25px #000;">Janssens</div>
<div class="t" style="left:1307.00px;top:539.40px;font-size:20.5px;color:#000;-webkit-text-stroke:0.25px #000;">[List]</div>
<div class="t" style="left:1473.00px;top:539.40px;font-size:20.5px;color:#000;-webkit-text-stroke:0.25px #000;">[List]</div>
<div class="t" style="left:1729.00px;top:539.40px;font-size:20.5px;color:#000;-webkit-text-stroke:0.25px #000;">ur.016215500601.96</div>
<div class="t" style="left:1977.00px;top:539.40px;font-size:20.5px;color:#000;-webkit-text-stroke:0.25px #000;">pub.118</div>
<div class="t" style="left:45.00px;top:569.61px;font-size:20.5px;color:#000;-webkit-text-stroke:0.25px #000;">[List]</div>
<div class="t" style="left:368.00px;top:569.61px;font-size:20.5px;color:#000;-webkit-text-stroke:0.25px #000;transform:scaleX(0.8462);">TRUE</div>
<div class="t" style="left:523.00px;top:569.61px;font-size:20.5px;color:#000;-webkit-text-stroke:0.25px #000;">grid.16821.3c</div>
<div class="t" style="left:867.00px;top:569.61px;font-size:20.5px;color:#000;-webkit-text-stroke:0.25px #000;">Xu-Dong</div>
<div class="t" style="left:1088.00px;top:569.61px;font-size:20.5px;color:#000;-webkit-text-stroke:0.25px #000;">Kong</div>
<div class="t" style="left:1307.00px;top:569.61px;font-size:20.5px;color:#000;-webkit-text-stroke:0.25px #000;">[List]</div>
<div class="t" style="left:1473.00px;top:569.61px;font-size:20.5px;color:#000;-webkit-text-stroke:0.25px #000;">[List]</div>
<div class="t" style="left:1729.00px;top:569.61px;font-size:20.5px;color:#000;-webkit-text-stroke:0.25px #000;">ur.01246677204.23</div>
<div class="t" style="left:1977.00px;top:569.61px;font-size:20.5px;color:#000;-webkit-text-stroke:0.25px #000;">pub.118</div>
<div class="t" style="left:45.00px;top:599.82px;font-size:20.5px;color:#000;-webkit-text-stroke:0.25px #000;">[List]</div>
<div class="t" style="left:866.00px;top:599.82px;font-size:20.5px;color:#000;-webkit-text-stroke:0.25px #000;">Changlin</div>
<div class="t" style="left:1089.00px;top:599.82px;font-size:20.5px;color:#000;-webkit-text-stroke:0.25px #000;">Tian</div>
<div class="t" style="left:1307.00px;top:599.82px;font-size:20.5px;color:#000;-webkit-text-stroke:0.25px #000;">[List]</div>
<div class="t" style="left:1473.00px;top:599.82px;font-size:20.5px;color:#000;-webkit-text-stroke:0.25px #000;">[List]</div>
<div class="t" style="left:1977.00px;top:599.82px;font-size:20.5px;color:#000;-webkit-text-stroke:0.25px #000;">pub.118</div>
<div class="t" style="left:45.00px;top:630.03px;font-size:20.5px;color:#000;-webkit-text-stroke:0.25px #000;">[List]</div>
<div class="t" style="left:523.00px;top:630.03px;font-size:20.5px;color:#000;-webkit-text-stroke:0.25px #000;">grid.1001.0</div>
<div class="t" style="left:867.00px;top:630.03px;font-size:20.5px;color:#000;-webkit-text-stroke:0.25px #000;">Saan</div>
<div class="t" style="left:1089.00px;top:630.03px;font-size:20.5px;color:#000;-webkit-text-stroke:0.25px #000;">Voss</div>
<div class="t" style="left:1307.00px;top:630.03px;font-size:20.5px;color:#000;-webkit-text-stroke:0.25px #000;">[List]</div>
<div class="t" style="left:1473.00px;top:630.03px;font-size:20.5px;color:#000;-webkit-text-stroke:0.25px #000;">[List]</div>
<div class="t" style="left:1729.00px;top:630.03px;font-size:20.5px;color:#000;-webkit-text-stroke:0.25px #000;">ur.012007503263.75</div>
<div class="t" style="left:1977.00px;top:630.03px;font-size:20.5px;color:#000;-webkit-text-stroke:0.25px #000;">pub.116</div>
<div class="t" style="left:45.00px;top:660.24px;font-size:20.5px;color:#000;-webkit-text-stroke:0.25px #000;">[List]</div>
<div class="t" style="left:523.00px;top:660.24px;font-size:20.5px;color:#000;-webkit-text-stroke:0.25px #000;">grid.1013.3</div>
<div class="t" style="left:866.00px;top:660.24px;font-size:20.5px;color:#000;-webkit-text-stroke:0.25px #000;">Liam D.</div>
<div class="t" style="left:1089.00px;top:660.24px;font-size:20.5px;color:#000;-webkit-text-stroke:0.25px #000;">Adair</div>
<div class="t" style="left:1307.00px;top:660.24px;font-size:20.5px;color:#000;-webkit-text-stroke:0.25px #000;">[List]</div>
<div class="t" style="left:1473.00px;top:660.24px;font-size:20.5px;color:#000;-webkit-text-stroke:0.25px #000;">[List]</div>
<div class="t" style="left:1729.00px;top:660.24px;font-size:20.5px;color:#000;-webkit-text-stroke:0.25px #000;">ur.010117716155.22</div>
<div class="t" style="left:1977.00px;top:660.24px;font-size:20.5px;color:#000;-webkit-text-stroke:0.25px #000;">pub.116</div>
<div class="t" style="left:45.00px;top:690.45px;font-size:20.5px;color:#000;-webkit-text-stroke:0.25px #000;">[List]</div>
<div class="t" style="left:523.00px;top:690.45px;font-size:20.5px;color:#000;-webkit-text-stroke:0.25px #000;">grid.14095.39</div>
<div class="t" style="left:866.00px;top:690.45px;font-size:20.5px;color:#000;-webkit-text-stroke:0.25px #000;">Katharina</div>
<div class="t" style="left:1089.00px;top:690.45px;font-size:20.5px;color:#000;-webkit-text-stroke:0.25px #000;">Achazi</div>
<div class="t" style="left:1307.00px;top:690.45px;font-size:20.5px;color:#000;-webkit-text-stroke:0.25px #000;">[List]</div>
<div class="t" style="left:1473.00px;top:690.45px;font-size:20.5px;color:#000;-webkit-text-stroke:0.25px #000;">[List]</div>
<div class="t" style="left:1729.00px;top:690.45px;font-size:20.5px;color:#000;-webkit-text-stroke:0.25px #000;">ur.01171125457.36</div>
<div class="t" style="left:1977.00px;top:690.45px;font-size:20.5px;color:#000;-webkit-text-stroke:0.25px #000;">pub.116</div>
<div class="t" style="left:45.00px;top:720.66px;font-size:20.5px;color:#000;-webkit-text-stroke:0.25px #000;">[List]</div>
<div class="t" style="left:523.00px;top:720.66px;font-size:20.5px;color:#000;-webkit-text-stroke:0.25px #000;">grid.7700.0</div>
<div class="t" style="left:866.00px;top:720.66px;font-size:20.5px;color:#000;-webkit-text-stroke:0.25px #000;">Heeyoung</div>
<div class="t" style="left:1088.00px;top:720.66px;font-size:20.5px;color:#000;-webkit-text-stroke:0.25px #000;">Kim</div>
<div class="t" style="left:1307.00px;top:720.66px;font-size:20.5px;color:#000;-webkit-text-stroke:0.25px #000;">[List]</div>
<div class="t" style="left:1473.00px;top:720.66px;font-size:20.5px;color:#000;-webkit-text-stroke:0.25px #000;">[List]</div>
<div class="t" style="left:1729.00px;top:720.66px;font-size:20.5px;color:#000;-webkit-text-stroke:0.25px #000;">ur.011411614321.93</div>
<div class="t" style="left:1977.00px;top:720.66px;font-size:20.5px;color:#000;-webkit-text-stroke:0.25px #000;">pub.116</div>
<div class="t" style="left:45.00px;top:750.87px;font-size:20.5px;color:#000;-webkit-text-stroke:0.25px #000;">[List]</div>
<div class="t" style="left:523.00px;top:750.87px;font-size:20.5px;color:#000;-webkit-text-stroke:0.25px #000;">grid.14095.39</div>
<div class="t" style="left:867.00px;top:750.87px;font-size:20.5px;color:#000;-webkit-text-stroke:0.25px #000;">Silke</div>
<div class="t" style="left:1088.00px;top:750.87px;font-size:20.5px;color:#000;-webkit-text-stroke:0.25px #000;">Bergemann</div>
<div class="t" style="left:1473.00px;top:750.87px;font-size:20.5px;color:#000;-webkit-text-stroke:0.25px #000;">[List]</div>
<div class="t" style="left:1729.00px;top:750.87px;font-size:20.5px;color:#000;-webkit-text-stroke:0.25px #000;">ur.0777467212.38</div>
<div class="t" style="left:1977.00px;top:750.87px;font-size:20.5px;color:#000;-webkit-text-stroke:0.25px #000;">pub.116</div>
<div class="t" style="left:45.00px;top:781.08px;font-size:20.5px;color:#000;-webkit-text-stroke:0.25px #000;">[List]</div>
<div class="t" style="left:523.00px;top:781.08px;font-size:20.5px;color:#000;-webkit-text-stroke:0.25px #000;">grid.7700.0</div>
<div class="t" style="left:866.00px;top:781.08px;font-size:20.5px;color:#000;-webkit-text-stroke:0.25px #000;">Ralf</div>
<div class="t" style="left:1088.00px;top:781.08px;font-size:20.5px;color:#000;-webkit-text-stroke:0.25px #000;">Bartenschlager</div>
<div class="t" style="left:1307.00px;top:781.08px;font-size:20.5px;color:#000;-webkit-text-stroke:0.25px #000;">[List]</div>
<div class="t" style="left:1473.00px;top:781.08px;font-size:20.5px;color:#000;-webkit-text-stroke:0.25px #000;">[List]</div>
<div class="t" style="left:1729.00px;top:781.08px;font-size:20.5px;color:#000;-webkit-text-stroke:0.25px #000;">ur.01331122660.37</div>
<div class="t" style="left:1977.00px;top:781.08px;font-size:20.5px;color:#000;-webkit-text-stroke:0.25px #000;">pub.116</div>
<div class="t" style="left:45.00px;top:811.29px;font-size:20.5px;color:#000;-webkit-text-stroke:0.25px #000;">[List]</div>
<div class="t" style="left:523.00px;top:811.29px;font-size:20.5px;color:#000;-webkit-text-stroke:0.25px #000;">grid.1013.3</div>
<div class="t" style="left:866.00px;top:811.29px;font-size:20.5px;color:#000;-webkit-text-stroke:0.25px #000;">Elizabeth J.</div>
<div class="t" style="left:1088.00px;top:811.29px;font-size:20.5px;color:#000;-webkit-text-stroke:0.25px #000;">New</div>
<div class="t" style="left:1307.00px;top:811.29px;font-size:20.5px;color:#000;-webkit-text-stroke:0.25px #000;">[List]</div>
<div class="t" style="left:1473.00px;top:811.29px;font-size:20.5px;color:#000;-webkit-text-stroke:0.25px #000;">[List]</div>
<div class="t" style="left:1729.00px;top:811.29px;font-size:20.5px;color:#000;-webkit-text-stroke:0.25px #000;">ur.0655212355.59</div>
<div class="t" style="left:1977.00px;top:811.29px;font-size:20.5px;color:#000;-webkit-text-stroke:0.25px #000;">pub.116</div>
<div class="t" style="left:45.00px;top:841.50px;font-size:20.5px;color:#000;-webkit-text-stroke:0.25px #000;">[List]</div>
<div class="t" style="left:523.00px;top:841.50px;font-size:20.5px;color:#000;-webkit-text-stroke:0.25px #000;">grid.14095.39</div>
<div class="t" style="left:867.00px;top:841.50px;font-size:20.5px;color:#000;-webkit-text-stroke:0.25px #000;">Jörg</div>
<div class="t" style="left:1088.00px;top:841.50px;font-size:20.5px;color:#000;-webkit-text-stroke:0.25px #000;">Rademann</div>
<div class="t" style="left:1307.00px;top:841.50px;font-size:20.5px;color:#000;-webkit-text-stroke:0.25px #000;">[List]</div>
<div class="t" style="left:1473.00px;top:841.50px;font-size:20.5px;color:#000;-webkit-text-stroke:0.25px #000;">[List]</div>
<div class="t" style="left:1729.00px;top:841.50px;font-size:20.5px;color:#000;-webkit-text-stroke:0.25px #000;">ur.01035437171.06</div>
<div class="t" style="left:1977.00px;top:841.50px;font-size:20.5px;color:#000;-webkit-text-stroke:0.25px #000;">pub.116</div>
<div class="t" style="left:45.00px;top:871.71px;font-size:20.5px;color:#000;-webkit-text-stroke:0.25px #000;">[List]</div>
<div class="t" style="left:368.00px;top:871.71px;font-size:20.5px;color:#000;-webkit-text-stroke:0.25px #000;transform:scaleX(0.8462);">TRUE</div>
<div class="t" style="left:523.00px;top:871.71px;font-size:20.5px;color:#000;-webkit-text-stroke:0.25px #000;">grid.1001.0</div>
<div class="t" style="left:866.00px;top:871.71px;font-size:20.5px;color:#000;-webkit-text-stroke:0.25px #000;">Christoph</div>
<div class="t" style="left:1088.00px;top:871.71px;font-size:20.5px;color:#000;-webkit-text-stroke:0.25px #000;">Nitsche</div>
<div class="t" style="left:1307.00px;top:871.71px;font-size:20.5px;color:#000;-webkit-text-stroke:0.25px #000;">[List]</div>
<div class="t" style="left:1473.00px;top:871.71px;font-size:20.5px;color:#000;-webkit-text-stroke:0.25px #000;">[List]</div>
<div class="t" style="left:1729.00px;top:871.71px;font-size:20.5px;color:#000;-webkit-text-stroke:0.25px #000;">ur.01330573065.39</div>
<div class="t" style="left:1977.00px;top:871.71px;font-size:20.5px;color:#000;-webkit-text-stroke:0.25px #000;">pub.116</div>
<div class="t" style="left:45.00px;top:901.92px;font-size:20.5px;color:#000;-webkit-text-stroke:0.25px #000;">[List]</div>
<div class="t" style="left:368.00px;top:901.92px;font-size:20.5px;color:#000;-webkit-text-stroke:0.25px #000;transform:scaleX(0.8462);">TRUE</div>
<div class="t" style="left:523.00px;top:901.92px;font-size:20.5px;color:#000;-webkit-text-stroke:0.25px #000;">grid.412004.3</div>
<div class="t" style="left:867.00px;top:901.92px;font-size:20.5px;color:#000;-webkit-text-stroke:0.25px #000;">Thomas</div>
<div class="t" style="left:1088.00px;top:901.92px;font-size:20.5px;color:#000;-webkit-text-stroke:0.25px #000;">Rauer</div>
<div class="t" style="left:1307.00px;top:901.92px;font-size:20.5px;color:#000;-webkit-text-stroke:0.25px #000;">[List]</div>
<div class="t" style="left:1473.00px;top:901.92px;font-size:20.5px;color:#000;-webkit-text-stroke:0.25px #000;">[List]</div>
<div class="t" style="left:1729.00px;top:901.92px;font-size:20.5px;color:#000;-webkit-text-stroke:0.25px #000;">ur.016662265026.08</div>
<div class="t" style="left:1977.00px;top:901.92px;font-size:20.5px;color:#000;-webkit-text-stroke:0.25px #000;">pub.117</div>
<div class="t" style="left:45.00px;top:932.13px;font-size:20.5px;color:#000;-webkit-text-stroke:0.25px #000;">[List]</div>
<div class="t" style="left:523.00px;top:932.13px;font-size:20.5px;color:#000;-webkit-text-stroke:0.25px #000;">grid.412004.3</div>
<div class="t" style="left:866.00px;top:932.13px;font-size:20.5px;color:#000;-webkit-text-stroke:0.25px #000;">Felix Karl-Ludwig</div>
<div class="t" style="left:1088.00px;top:932.13px;font-size:20.5px;color:#000;-webkit-text-stroke:0.25px #000;">Klingebiel</div>
<div class="t" style="left:1307.00px;top:932.13px;font-size:20.5px;color:#000;-webkit-text-stroke:0.25px #000;">[List]</div>
<div class="t" style="left:1473.00px;top:932.13px;font-size:20.5px;color:#000;-webkit-text-stroke:0.25px #000;">[List]</div>
<div class="t" style="left:1729.00px;top:932.13px;font-size:20.5px;color:#000;-webkit-text-stroke:0.25px #000;">ur.015322652103.74</div>
<div class="t" style="left:1977.00px;top:932.13px;font-size:20.5px;color:#000;-webkit-text-stroke:0.25px #000;">pub.117</div>
<div class="t" style="left:45.00px;top:962.34px;font-size:20.5px;color:#000;-webkit-text-stroke:0.25px #000;">[List]</div>
<div class="t" style="left:523.00px;top:962.34px;font-size:20.5px;color:#000;-webkit-text-stroke:0.25px #000;">grid.5361.1</div>
<div class="t" style="left:867.00px;top:962.34px;font-size:20.5px;color:#000;-webkit-text-stroke:0.25px #000;">Adrian</div>
<div class="t" style="left:1088.00px;top:962.34px;font-size:20.5px;color:#000;-webkit-text-stroke:0.25px #000;">Lühring</div>
<div class="t" style="left:1473.00px;top:962.34px;font-size:20.5px;color:#000;-webkit-text-stroke:0.25px #000;">[List]</div>
<div class="t" style="left:1729.00px;top:962.34px;font-size:20.5px;color:#000;-webkit-text-stroke:0.25px #000;">ur.016375127316.37</div>
<div class="t" style="left:1977.00px;top:962.34px;font-size:20.5px;color:#000;-webkit-text-stroke:0.25px #000;">pub.117</div>
<div class="t" style="left:45.00px;top:992.55px;font-size:20.5px;color:#000;-webkit-text-stroke:0.25px #000;">[List]</div>
<div class="t" style="left:523.00px;top:992.55px;font-size:20.5px;color:#000;-webkit-text-stroke:0.25px #000;">grid.240382.f</div>
<div class="t" style="left:867.00px;top:992.55px;font-size:20.5px;color:#000;-webkit-text-stroke:0.25px #000;">Alexander</div>
<div class="t" style="left:1088.00px;top:992.55px;font-size:20.5px;color:#000;-webkit-text-stroke:0.25px #000;">Küffer</div>
<div class="t" style="left:1307.00px;top:992.55px;font-size:20.5px;color:#000;-webkit-text-stroke:0.25px #000;">[List]</div>
<div class="t" style="left:1473.00px;top:992.55px;font-size:20.5px;color:#000;-webkit-text-stroke:0.25px #000;">[List]</div>
<div class="t" style="left:1729.00px;top:992.55px;font-size:20.5px;color:#000;-webkit-text-stroke:0.25px #000;">ur.016463640754.31</div>
<div class="t" style="left:1977.00px;top:992.55px;font-size:20.5px;color:#000;-webkit-text-stroke:0.25px #000;">pub.117</div>
<div class="t" style="left:45.00px;top:1022.76px;font-size:20.5px;color:#000;-webkit-text-stroke:0.25px #000;">[List]</div>
<div class="t" style="left:523.00px;top:1022.76px;font-size:20.5px;color:#000;-webkit-text-stroke:0.25px #000;">grid.412004.3</div>
<div class="t" style="left:867.00px;top:1022.76px;font-size:20.5px;color:#000;-webkit-text-stroke:0.25px #000;">Anna-Sophie</div>
<div class="t" style="left:1088.00px;top:1022.76px;font-size:20.5px;color:#000;-webkit-text-stroke:0.25px #000;">Hofer</div>
<div class="t" style="left:1307.00px;top:1022.76px;font-size:20.5px;color:#000;-webkit-text-stroke:0.25px #000;">[List]</div>
<div class="t" style="left:1473.00px;top:1022.76px;font-size:20.5px;color:#000;-webkit-text-stroke:0.25px #000;">[List]</div>
<div class="t" style="left:1729.00px;top:1022.76px;font-size:20.5px;color:#000;-webkit-text-stroke:0.25px #000;">ur.012147765127.55</div>
<div class="t" style="left:1977.00px;top:1022.76px;font-size:20.5px;color:#000;-webkit-text-stroke:0.25px #000;">pub.117</div>
<div class="t" style="left:45.00px;top:1052.97px;font-size:20.5px;color:#000;-webkit-text-stroke:0.25px #000;">[List]</div>
<div class="t" style="left:523.00px;top:1052.97px;font-size:20.5px;color:#000;-webkit-text-stroke:0.25px #000;">grid.412004.3</div>
<div class="t" style="left:866.00px;top:1052.97px;font-size:20.5px;color:#000;-webkit-text-stroke:0.25px #000;">Raphael Marco</div>
<div class="t" style="left:1088.00px;top:1052.97px;font-size:20.5px;color:#000;-webkit-text-stroke:0.25px #000;">Ferrari</div>
<div class="t" style="left:1307.00px;top:1052.97px;font-size:20.5px;color:#000;-webkit-text-stroke:0.25px #000;">[List]</div>
<div class="t" style="left:1473.00px;top:1052.97px;font-size:20.5px;color:#000;-webkit-text-stroke:0.25px #000;">[List]</div>
<div class="t" style="left:1729.00px;top:1052.97px;font-size:20.5px;color:#000;-webkit-text-stroke:0.25px #000;">ur.01326473231.31</div>
<div class="t" style="left:1977.00px;top:1052.97px;font-size:20.5px;color:#000;-webkit-text-stroke:0.25px #000;">pub.117</div>
<div class="t" style="left:45.00px;top:1083.18px;font-size:20.5px;color:#000;-webkit-text-stroke:0.25px #000;">[List]</div>
<div class="t" style="left:523.00px;top:1083.18px;font-size:20.5px;color:#000;-webkit-text-stroke:0.25px #000;">grid.412004.3</div>
<div class="t" style="left:866.00px;top:1083.18px;font-size:20.5px;color:#000;-webkit-text-stroke:0.25px #000;">Michael</div>
<div class="t" style="left:1088.00px;top:1083.18px;font-size:20.5px;color:#000;-webkit-text-stroke:0.25px #000;">Kupka</div>
<div class="t" style="left:1307.00px;top:1083.18px;font-size:20.5px;color:#000;-webkit-text-stroke:0.25px #000;">[List]</div>
<div class="t" style="left:1473.00px;top:1083.18px;font-size:20.5px;color:#000;-webkit-text-stroke:0.25px #000;">[List]</div>
<div class="t" style="left:1729.00px;top:1083.18px;font-size:20.5px;color:#000;-webkit-text-stroke:0.25px #000;">ur.011702471602.34</div>
<div class="t" style="left:1977.00px;top:1083.18px;font-size:20.5px;color:#000;-webkit-text-stroke:0.25px #000;">pub.117</div>
<div class="t" style="left:45.00px;top:1113.39px;font-size:20.5px;color:#000;-webkit-text-stroke:0.25px #000;">[List]</div>
<div class="t" style="left:523.00px;top:1113.39px;font-size:20.5px;color:#000;-webkit-text-stroke:0.25px #000;">grid.412004.3</div>
<div class="t" style="left:866.00px;top:1113.39px;font-size:20.5px;color:#000;-webkit-text-stroke:0.25px #000;">Hans-Christoph</div>
<div class="t" style="left:1088.00px;top:1113.39px;font-size:20.5px;color:#000;-webkit-text-stroke:0.25px #000;">Pape</div>
<div class="t" style="left:1307.00px;top:1113.39px;font-size:20.5px;color:#000;-webkit-text-stroke:0.25px #000;">[List]</div>
<div class="t" style="left:1473.00px;top:1113.39px;font-size:20.5px;color:#000;-webkit-text-stroke:0.25px #000;">[List]</div>
<div class="t" style="left:1729.00px;top:1113.39px;font-size:20.5px;color:#000;-webkit-text-stroke:0.25px #000;">ur.01203110476.30</div>
<div class="t" style="left:1977.00px;top:1113.39px;font-size:20.5px;color:#000;-webkit-text-stroke:0.25px #000;">pub.117</div>
<div class="t" style="left:45.00px;top:1143.60px;font-size:20.5px;color:#000;-webkit-text-stroke:0.25px #000;">[List]</div>
<div class="t" style="left:368.00px;top:1143.60px;font-size:20.5px;color:#000;-webkit-text-stroke:0.25px #000;transform:scaleX(0.8462);">TRUE</div>
<div class="t" style="left:866.00px;top:1143.60px;font-size:20.5px;color:#000;-webkit-text-stroke:0.25px #000;">Cameron James</div>
<div class="t" style="left:1089.00px;top:1143.60px;font-size:20.5px;color:#000;-webkit-text-stroke:0.25px #000;">Atkinson</div>
<div class="t" style="left:1307.00px;top:1143.60px;font-size:20.5px;color:#000;-webkit-text-stroke:0.25px #000;">[List]</div>
<div class="t" style="left:1473.00px;top:1143.60px;font-size:20.5px;color:#000;-webkit-text-stroke:0.25px #000;">[List]</div>
<div class="t" style="left:1977.00px;top:1143.60px;font-size:20.5px;color:#000;-webkit-text-stroke:0.25px #000;">pub.116</div>
<div class="a" style="left:41.8px;top:352.8px;width:220.4px;height:28px;border:1.2px solid #fff"></div>
<div class="a" style="left:41.8px;top:349px;width:224.2px;height:3.9px;background:#1d6b41"></div>
<div class="a" style="left:38px;top:353.4px;width:3.8px;height:31.1px;background:#1d6b41"></div>
<div class="a" style="left:262.2px;top:349px;width:3.8px;height:35.5px;background:#1d6b41"></div>
<div class="a" style="left:38px;top:380.8px;width:228px;height:3.7px;background:#1d6b41"></div>
<div class="a" style="left:257.5px;top:376.5px;width:11.5px;height:11.5px;background:#1d6b41;border:1px solid #fff"></div>
<div class="a" style="left:17.3px;top:185.4px;width:176.3px;height:44.2px;border:1.2px solid #c9c9c9;border-radius:6px;background:#fff"></div><div class="a" style="left:31px;top:186.5px;width:154.2px;height:42px;overflow:hidden"><div class="t" style="left:-1.7px;top:11.1px;font-size:24px;color:#111;-webkit-text-stroke:0.35px #111;transform:scaleX(1.054)">DSLResultTab</div></div>
<svg class="a" style="left:0;top:0" width="2048" height="1159" viewBox="0 0 2048 1159">
<!-- window corner -->
<path d="M0,0 H8.5 A8.5,8.5 0 0,0 0,8.5 Z" fill="#3a4a52"/>
<!-- traffic lights -->
<circle cx="33.9" cy="28.4" r="10.7" fill="#ff5f57" stroke="#e2463f" stroke-width="1"/>
<circle cx="33.9" cy="28.4" r="3.2" fill="#6b0a0a"/>
<circle cx="71.6" cy="28.4" r="10.7" fill="#febc2e" stroke="#e1a325" stroke-width="1"/>
<circle cx="109.3" cy="28.4" r="10.7" fill="#28c840" stroke="#1fab32" stroke-width="1"/>
<!-- toggle -->
<defs>
<linearGradient id="tg" x1="0" y1="0" x2="1" y2="0"><stop offset="0" stop-color="#5e5e5e"/><stop offset="1" stop-color="#8e8e8e"/></linearGradient>
<linearGradient id="kb" x1="0" y1="0" x2="0" y2="1"><stop offset="0" stop-color="#ffffff"/><stop offset="1" stop-color="#ececec"/></linearGradient>
<radialGradient id="sh"><stop offset="0" stop-color="#000" stop-opacity="0.35"/><stop offset="1" stop-color="#000" stop-opacity="0"/></radialGradient>
<linearGradient id="cb" x1="0" y1="0" x2="0" y2="1"><stop offset="0" stop-color="#fefefe"/><stop offset="1" stop-color="#eeeeee"/></linearGradient>
</defs>
<rect x="283.3" y="14.9" width="52.7" height="26.6" rx="13.3" fill="url(#tg)" stroke="#6a6a6a" stroke-width="0.8"/>
<ellipse cx="297" cy="31.5" rx="13" ry="11" fill="url(#sh)"/>
<circle cx="296.4" cy="28.3" r="11.9" fill="url(#kb)" stroke="#8a8a8a" stroke-width="0.6"/>
<!-- home -->
<g fill="none" stroke="#666" stroke-width="2.1" stroke-linejoin="round" stroke-linecap="round">
<path d="M361.8,26 L373.8,14.2 L385.8,26 V39.2 Q385.8,40.6 384.4,40.6 H379.2 Q377.9,40.6 377.9,39.2 V31.4 Q377.9,29.6 376,29.6 H371.3 Q369.4,29.6 369.4,31.4 V39.2 Q369.4,40.6 368.1,40.6 H363.2 Q361.8,40.6 361.8,39.2 Z"/>
<!-- save -->
<path d="M415,15.9 H432.2 L437,20.7 V38.2 Q437,40.6 434.6,40.6 H415 Q412.6,40.6 412.6,38.2 V18.3 Q412.6,15.9 415,15.9 Z"/>
<path d="M418.6,16 V21 Q418.6,22.8 420.4,22.8 H427.4 Q429.2,22.8 429.2,21 V16"/>
<path d="M415.2,40.5 V31 Q415.2,29.2 417,29.2 H432.6 Q434.4,29.2 434.4,31 V40.5"/>
<!-- save edit -->
<path d="M477,40.6 H466 Q463.6,40.6 463.6,38.2 V18.3 Q463.6,15.9 466,15.9 H483.2 L488,20.7 V23"/>
<path d="M469.6,16 V21 Q469.6,22.8 471.4,22.8 H478.4 Q480.2,22.8 480.2,21 V16"/>
<path d="M466.2,40.5 V31 Q466.2,29.2 468,29.2 H479"/>
</g>
<path d="M475.6,41.3 L489,28.2" stroke="#666" stroke-width="5.4" stroke-linecap="round"/>
<!-- undo -->
<g fill="none" stroke="#c4c4c4" stroke-width="2" stroke-linecap="round" stroke-linejoin="round">
<path d="M516.3,13.5 V23.6 H526.2"/>
<path d="M516.6,23.3 L526.5,15.2 Q531,11.8 535.5,14.6 Q539.8,18 538.6,23 Q537.6,26.5 534.5,29 L520.2,42.5"/>
<!-- chevron -->
<path d="M557.6,26 L562.5,31.3 L567.4,26" stroke="#b0b0b0" stroke-width="2.4"/>
<!-- redo -->
<path d="M614.3,27.5 A12.5,12.5 0 1,1 607.5,16.8"/>
<path d="M612.6,15.2 V22.2 H606"/>
</g>
<!-- dots -->
<circle cx="643.7" cy="28.2" r="2.6" fill="#555"/><circle cx="653" cy="28.2" r="2.6" fill="#555"/><circle cx="662.4" cy="28.2" r="2.6" fill="#555"/>
<!-- excel file icon -->
<path d="M1252,14 H1267 L1273,20 V41.5 H1252 Z" fill="#fafafa" stroke="#dddddd" stroke-width="1"/>
<rect x="1262.5" y="24.5" width="8" height="7" fill="none" stroke="#7fb89a" stroke-width="1"/>
<path d="M1266.5,24.5 V31.5 M1262.5,28 H1270.5" stroke="#7fb89a" stroke-width="1"/>
<rect x="1248.4" y="20.9" width="14.4" height="14" rx="1.5" fill="#6aa888"/>
<path d="M1252,24 L1259.2,31.8 M1259.2,24 L1252,31.8" stroke="#fff" stroke-width="1.5"/>
<path d="M1452.5,25.5 L1459,31 L1465.5,25.5" fill="none" stroke="#777" stroke-width="2.2" stroke-linecap="round" stroke-linejoin="round"/>
<!-- formula bar icons -->
<path d="M142.6,274.6 L149.05,264.4 L155.5,274.6 Z" fill="#6a6a6a"/>
<path d="M142.6,286.2 L155.5,286.2 L149.05,295.8 Z" fill="#6a6a6a"/>
<path d="M188.8,275.8 L205.7,292.7 M205.7,275.8 L188.8,292.7" stroke="#cbcbcb" stroke-width="3.4" stroke-linecap="round"/>
<path d="M241.3,283.8 L249.6,292.6 L264,275.8" fill="none" stroke="#cbcbcb" stroke-width="3.4" stroke-linecap="round" stroke-linejoin="round"/>
<g fill="none" stroke="#444" stroke-linecap="round">
<path d="M285.8,294.6 C288.6,296.6 290.6,293.5 291.3,288.5 L293,277.5 C293.8,271.5 296.3,269 299.8,269.4" stroke-width="2.7"/>
<path d="M288.8,279.2 H298.9" stroke-width="1.7" stroke-linecap="butt"/>
<path d="M300.3,281.6 C303.2,281 304.3,283.8 305.3,286.8 C306.4,290 308,290.8 309.8,289.8" stroke-width="2.5"/>
<path d="M298.4,289.6 C301,290.6 303,287.3 305,284.6 C306.5,282.6 307.6,281.6 309.2,282" stroke-width="1.5"/>
</g>
<g fill="#444"><circle cx="301.2" cy="271.5" r="2"/><circle cx="285.9" cy="294.7" r="2"/><circle cx="298.6" cy="289.5" r="1.8"/><circle cx="309.2" cy="282" r="1.8"/></g>
<path d="M322,281 L327.5,286.5 L333,281" fill="none" stroke="#c8c8c8" stroke-width="2" stroke-linecap="round" stroke-linejoin="round"/>
<!-- tab underline -->
<rect x="1193" y="106.6" width="65.8" height="4.4" rx="2.2" fill="#1e7145"/>
<!-- separators -->
<rect x="214" y="132" width="1.5" height="116" fill="#d5d5d5"/>
<rect x="646" y="132" width="1.5" height="116" fill="#d5d5d5"/>
<rect x="776" y="132" width="1.5" height="116" fill="#d5d5d5"/>
<rect x="1384" y="132" width="1.5" height="116" fill="#d5d5d5"/>
<!-- pivot icon -->
<rect x="240.9" y="129.4" width="28.1" height="27.9" fill="#f8f8f8" stroke="#444" stroke-width="2"/>
<rect x="244.3" y="132.6" width="4" height="4.6" fill="#cfcfcf" stroke="#777" stroke-width="1.1"/>
<rect x="252.2" y="132.6" width="13.5" height="4.6" fill="#cfcfcf" stroke="#777" stroke-width="1.1"/>
<rect x="244.3" y="140.5" width="4" height="13.5" fill="#cfcfcf" stroke="#777" stroke-width="1.1"/>
<g fill="none" stroke="#1f87d6" stroke-width="2" stroke-linecap="round" stroke-linejoin="round">
<path d="M255,152 H263.5 V141.5"/><path d="M260.5,143.8 L263.5,140.3 L266.5,143.8"/><path d="M257.2,149 L253.8,152 L257.2,155"/>
</g>
<!-- remove duplicates -->
<rect x="244.5" y="171" width="20.6" height="9" fill="#8cc4ee" stroke="#1e64b4" stroke-width="2"/>
<path d="M244.5,180 V199 M265.1,180 V187.5" stroke="#444" stroke-width="2"/>
<path d="M244.5,189.8 H253.5 L257.5,194.5 L253.5,199.2 H244.5 Z" fill="#8cc4ee" stroke="#1e64b4" stroke-width="2" stroke-linejoin="miter"/>
<path d="M257.5,187.5 L269.5,199.8 M269.5,187.5 L257.5,199.8" stroke="#e8434a" stroke-width="1.6"/>
<!-- convert to range -->
<rect x="244.5" y="212.4" width="18.8" height="9.6" fill="#fafafa" stroke="#444" stroke-width="2"/>
<rect x="245.5" y="213.4" width="8" height="7.6" fill="#8cc4ee"/>
<path d="M253.8,212.4 V222" stroke="#444" stroke-width="2"/>
<path d="M256,227 H268.8 V239.4 H256 L261,233.2 Z" fill="#8cc4ee" stroke="#444" stroke-width="2"/>
<path d="M246,222.5 Q239,228 242,234 Q245,238 255,236.5" fill="none" stroke="#1f87d6" stroke-width="2"/>
<path d="M250.5,232 L255.5,236.4 L250.5,240.5" fill="none" stroke="#1f87d6" stroke-width="2" stroke-linecap="round" stroke-linejoin="round"/>
<!-- insert slicer -->
<rect x="566" y="133" width="51" height="51" fill="#f7f7f7"/><path d="M601,184 H566 V133 H617 V158.5" fill="none" stroke="#3a3a3a" stroke-width="2"/>
<rect x="567" y="134" width="50" height="7" fill="#c6c6c6"/>
<path d="M567,141.2 H617" stroke="#3a3a3a" stroke-width="1.6"/>
<rect x="573.6" y="147.6" width="37.2" height="10.4" fill="#8cc4ee" stroke="#1e64b4" stroke-width="1.8"/>
<rect x="573.6" y="165" width="24.5" height="9.8" fill="#c6c6c6" stroke="#6d6d6d" stroke-width="1.4"/>
<path d="M595,161.2 H621 V166.3 L612,175.2 V187.8 H604 V175.2 L595,166.3 Z" fill="#f5f5f5" stroke="#f3f3f3" stroke-width="4.5" stroke-linejoin="miter"/>
<path d="M595,161.2 H621 V166.3 L612,175.2 V187.8 H604 V175.2 L595,166.3 Z" fill="#f5f5f5" stroke="#3a3a3a" stroke-width="2" stroke-linejoin="miter"/>
<!-- refresh -->
<path d="M698.5,184 H679.8 V133.2 H703 L717,147.3 V157" fill="#f7f7f7" stroke="#3a3a3a" stroke-width="2" stroke-linejoin="miter"/>
<path d="M703,133.2 V147.3 H717" fill="none" stroke="#3a3a3a" stroke-width="2"/>
<g fill="none" stroke="#23b04b" stroke-width="2.2">
<path d="M702.2,172 A13.4,13.4 0 0,1 727.8,168.5"/>
<path d="M728.4,177.5 A13.4,13.4 0 0,1 702.6,180.5"/>
<path d="M720.5,170.6 H728.9 V162.5" stroke-linecap="butt"/>
<path d="M709.5,178.4 H701.2 V186.5" stroke-linecap="butt"/>
</g>
<path d="M739.8,156 L744.9,161.5 L750,156" fill="none" stroke="#3a3a3a" stroke-width="2.2" stroke-linecap="round" stroke-linejoin="round"/>
<!-- checkboxes -->
<g stroke="#c3c3c3" stroke-width="1.1" fill="url(#cb)">
<rect x="806.4" y="131.7" width="24" height="24" rx="4.5"/>
<rect x="806.4" y="173.2" width="24" height="24" rx="4.5"/>
<rect x="806.4" y="214.7" width="24" height="24" rx="4.5"/>
<rect x="989.7" y="131.7" width="24" height="24" rx="4.5"/>
<rect x="989.7" y="173.2" width="24" height="24" rx="4.5"/>
<rect x="989.7" y="214.7" width="24" height="24" rx="4.5"/>
<rect x="1204.7" y="131.7" width="24" height="24" rx="4.5"/>
</g>
<g fill="none" stroke="#4a4a4a" stroke-width="3.8" stroke-linecap="round" stroke-linejoin="round">
<path d="M811.5,141 L818.3,149.4 L829.6,132"/>
<path d="M811.5,224 L818.3,232.4 L829.6,215"/>
<path d="M1209.8,141 L1216.6,149.4 L1227.9,132"/>
</g>
<!-- gallery -->
<rect x="1404.3" y="125.4" width="700" height="107.3" rx="5.5" fill="#fff" stroke="#d0d0d0" stroke-width="1.4"/>
<path d="M1423.2,174.2 L1416.6,179.4 L1423.2,184.6" fill="none" stroke="#222" stroke-width="2.8" stroke-linecap="round" stroke-linejoin="round"/>
<rect x="1438.5" y="129.6" width="131.8" height="98.8" rx="7" fill="#d5e8da" stroke="#4c9c69" stroke-width="2"/>
<rect x="1447" y="136" width="115" height="16.70" fill="#4ea72e"/>
<rect x="1447" y="152.7" width="115" height="17.00" fill="#d9f2d0"/>
<rect x="1447" y="169.7" width="115" height="16.90" fill="#ffffff"/>
<rect x="1447" y="186.6" width="115" height="17.00" fill="#d9f2d0"/>
<rect x="1447" y="203.6" width="115" height="18.70" fill="#ffffff"/>
<rect x="1447" y="151.90" width="115" height="1.6" fill="#8ed973"/>
<rect x="1447" y="168.90" width="115" height="1.6" fill="#8ed973"/>
<rect x="1447" y="185.80" width="115" height="1.6" fill="#8ed973"/>
<rect x="1447" y="202.80" width="115" height="1.6" fill="#8ed973"/>
<rect x="1447.5" y="136.2" width="114" height="85.8" fill="none" stroke="#8ed973" stroke-width="1.6"/>
<rect x="1448.2" y="136.8" width="112.6" height="15.2" fill="#4ea72e"/>
<rect x="1452.50" y="142.95" width="13" height="2.5" rx="0.6" fill="#ffffff"/>
<rect x="1452.50" y="160.15" width="13" height="2.5" rx="0.6" fill="#2a2a2a"/>
<rect x="1452.50" y="176.85" width="13" height="2.5" rx="0.6" fill="#2a2a2a"/>
<rect x="1452.50" y="193.75" width="13" height="2.5" rx="0.6" fill="#2a2a2a"/>
<rect x="1452.50" y="210.95" width="13" height="2.5" rx="0.6" fill="#2a2a2a"/>
<rect x="1475.17" y="142.95" width="13" height="2.5" rx="0.6" fill="#ffffff"/>
<rect x="1475.17" y="160.15" width="13" height="2.5" rx="0.6" fill="#2a2a2a"/>
<rect x="1475.17" y="176.85" width="13" height="2.5" rx="0.6" fill="#2a2a2a"/>
<rect x="1475.17" y="193.75" width="13" height="2.5" rx="0.6" fill="#2a2a2a"/>
<rect x="1475.17" y="210.95" width="13" height="2.5" rx="0.6" fill="#2a2a2a"/>
<rect x="1497.84" y="142.95" width="13" height="2.5" rx="0.6" fill="#ffffff"/>
<rect x="1497.84" y="160.15" width="13" height="2.5" rx="0.6" fill="#2a2a2a"/>
<rect x="1497.84" y="176.85" width="13" height="2.5" rx="0.6" fill="#2a2a2a"/>
<rect x="1497.84" y="193.75" width="13" height="2.5" rx="0.6" fill="#2a2a2a"/>
<rect x="1497.84" y="210.95" width="13" height="2.5" rx="0.6" fill="#2a2a2a"/>
<rect x="1520.51" y="142.95" width="13" height="2.5" rx="0.6" fill="#ffffff"/>
<rect x="1520.51" y="160.15" width="13" height="2.5" rx="0.6" fill="#2a2a2a"/>
<rect x="1520.51" y="176.85" width="13" height="2.5" rx="0.6" fill="#2a2a2a"/>
<rect x="1520.51" y="193.75" width="13" height="2.5" rx="0.6" fill="#2a2a2a"/>
<rect x="1520.51" y="210.95" width="13" height="2.5" rx="0.6" fill="#2a2a2a"/>
<rect x="1543.18" y="142.95" width="13" height="2.5" rx="0.6" fill="#ffffff"/>
<rect x="1543.18" y="160.15" width="13" height="2.5" rx="0.6" fill="#2a2a2a"/>
<rect x="1543.18" y="176.85" width="13" height="2.5" rx="0.6" fill="#2a2a2a"/>
<rect x="1543.18" y="193.75" width="13" height="2.5" rx="0.6" fill="#2a2a2a"/>
<rect x="1543.18" y="210.95" width="13" height="2.5" rx="0.6" fill="#2a2a2a"/>
<rect x="1581.00" y="136" width="22.30" height="16.60" fill="#000000"/>
<rect x="1585.65" y="142.95" width="13" height="2.5" rx="0.6" fill="#ffffff"/>
<rect x="1605.50" y="136" width="20.50" height="16.60" fill="#000000"/>
<rect x="1609.25" y="142.95" width="13" height="2.5" rx="0.6" fill="#ffffff"/>
<rect x="1628.00" y="136" width="20.60" height="16.60" fill="#000000"/>
<rect x="1631.80" y="142.95" width="13" height="2.5" rx="0.6" fill="#ffffff"/>
<rect x="1650.80" y="136" width="20.20" height="16.60" fill="#000000"/>
<rect x="1654.40" y="142.95" width="13" height="2.5" rx="0.6" fill="#ffffff"/>
<rect x="1673.30" y="136" width="22.70" height="16.60" fill="#000000"/>
<rect x="1678.15" y="142.95" width="13" height="2.5" rx="0.6" fill="#ffffff"/>
<rect x="1581.00" y="154.8" width="22.30" height="14.80" fill="#a6a6a6"/>
<rect x="1585.65" y="160.15" width="13" height="2.5" rx="0.6" fill="#2a2a2a"/>
<rect x="1605.50" y="154.8" width="20.50" height="14.80" fill="#a6a6a6"/>
<rect x="1609.25" y="160.15" width="13" height="2.5" rx="0.6" fill="#2a2a2a"/>
<rect x="1628.00" y="154.8" width="20.60" height="14.80" fill="#a6a6a6"/>
<rect x="1631.80" y="160.15" width="13" height="2.5" rx="0.6" fill="#2a2a2a"/>
<rect x="1650.80" y="154.8" width="20.20" height="14.80" fill="#a6a6a6"/>
<rect x="1654.40" y="160.15" width="13" height="2.5" rx="0.6" fill="#2a2a2a"/>
<rect x="1673.30" y="154.8" width="22.70" height="14.80" fill="#a6a6a6"/>
<rect x="1678.15" y="160.15" width="13" height="2.5" rx="0.6" fill="#2a2a2a"/>
<rect x="1581.00" y="171.8" width="22.30" height="14.80" fill="#d9d9d9"/>
<rect x="1585.65" y="176.85" width="13" height="2.5" rx="0.6" fill="#2a2a2a"/>
<rect x="1605.50" y="171.8" width="20.50" height="14.80" fill="#d9d9d9"/>
<rect x="1609.25" y="176.85" width="13" height="2.5" rx="0.6" fill="#2a2a2a"/>
<rect x="1628.00" y="171.8" width="20.60" height="14.80" fill="#d9d9d9"/>
<rect x="1631.80" y="176.85" width="13" height="2.5" rx="0.6" fill="#2a2a2a"/>
<rect x="1650.80" y="171.8" width="20.20" height="14.80" fill="#d9d9d9"/>
<rect x="1654.40" y="176.85" width="13" height="2.5" rx="0.6" fill="#2a2a2a"/>
<rect x="1673.30" y="171.8" width="22.70" height="14.80" fill="#d9d9d9"/>
<rect x="1678.15" y="176.85" width="13" height="2.5" rx="0.6" fill="#2a2a2a"/>
<rect x="1581.00" y="188.8" width="22.30" height="14.80" fill="#a6a6a6"/>
<rect x="1585.65" y="193.75" width="13" height="2.5" rx="0.6" fill="#2a2a2a"/>
<rect x="1605.50" y="188.8" width="20.50" height="14.80" fill="#a6a6a6"/>
<rect x="1609.25" y="193.75" width="13" height="2.5" rx="0.6" fill="#2a2a2a"/>
<rect x="1628.00" y="188.8" width="20.60" height="14.80" fill="#a6a6a6"/>
<rect x="1631.80" y="193.75" width="13" height="2.5" rx="0.6" fill="#2a2a2a"/>
<rect x="1650.80" y="188.8" width="20.20" height="14.80" fill="#a6a6a6"/>
<rect x="1654.40" y="193.75" width="13" height="2.5" rx="0.6" fill="#2a2a2a"/>
<rect x="1673.30" y="188.8" width="22.70" height="14.80" fill="#a6a6a6"/>
<rect x="1678.15" y="193.75" width="13" height="2.5" rx="0.6" fill="#2a2a2a"/>
<rect x="1581.00" y="205.8" width="22.30" height="16.80" fill="#d9d9d9"/>
<rect x="1585.65" y="210.95" width="13" height="2.5" rx="0.6" fill="#2a2a2a"/>
<rect x="1605.50" y="205.8" width="20.50" height="16.80" fill="#d9d9d9"/>
<rect x="1609.25" y="210.95" width="13" height="2.5" rx="0.6" fill="#2a2a2a"/>
<rect x="1628.00" y="205.8" width="20.60" height="16.80" fill="#d9d9d9"/>
<rect x="1631.80" y="210.95" width="13" height="2.5" rx="0.6" fill="#2a2a2a"/>
<rect x="1650.80" y="205.8" width="20.20" height="16.80" fill="#d9d9d9"/>
<rect x="1654.40" y="210.95" width="13" height="2.5" rx="0.6" fill="#2a2a2a"/>
<rect x="1673.30" y="205.8" width="22.70" height="16.80" fill="#d9d9d9"/>
<rect x="1678.15" y="210.95" width="13" height="2.5" rx="0.6" fill="#2a2a2a"/>
<rect x="1715.00" y="136" width="22.30" height="16.60" fill="#1b5e82"/>
<rect x="1719.65" y="142.95" width="13" height="2.5" rx="0.6" fill="#ffffff"/>
<rect x="1739.50" y="136" width="20.50" height="16.60" fill="#1b5e82"/>
<rect x="1743.25" y="142.95" width="13" height="2.5" rx="0.6" fill="#ffffff"/>
<rect x="1762.00" y="136" width="20.60" height="16.60" fill="#1b5e82"/>
<rect x="1765.80" y="142.95" width="13" height="2.5" rx="0.6" fill="#ffffff"/>
<rect x="1784.80" y="136" width="20.20" height="16.60" fill="#1b5e82"/>
<rect x="1788.40" y="142.95" width="13" height="2.5" rx="0.6" fill="#ffffff"/>
<rect x="1807.30" y="136" width="22.70" height="16.60" fill="#1b5e82"/>
<rect x="1812.15" y="142.95" width="13" height="2.5" rx="0.6" fill="#ffffff"/>
<rect x="1715.00" y="154.8" width="22.30" height="14.80" fill="#83cbeb"/>
<rect x="1719.65" y="160.15" width="13" height="2.5" rx="0.6" fill="#2a2a2a"/>
<rect x="1739.50" y="154.8" width="20.50" height="14.80" fill="#83cbeb"/>
<rect x="1743.25" y="160.15" width="13" height="2.5" rx="0.6" fill="#2a2a2a"/>
<rect x="1762.00" y="154.8" width="20.60" height="14.80" fill="#83cbeb"/>
<rect x="1765.80" y="160.15" width="13" height="2.5" rx="0.6" fill="#2a2a2a"/>
<rect x="1784.80" y="154.8" width="20.20" height="14.80" fill="#83cbeb"/>
<rect x="1788.40" y="160.15" width="13" height="2.5" rx="0.6" fill="#2a2a2a"/>
<rect x="1807.30" y="154.8" width="22.70" height="14.80" fill="#83cbeb"/>
<rect x="1812.15" y="160.15" width="13" height="2.5" rx="0.6" fill="#2a2a2a"/>
<rect x="1715.00" y="171.8" width="22.30" height="14.80" fill="#c0e4f5"/>
<rect x="1719.65" y="176.85" width="13" height="2.5" rx="0.6" fill="#2a2a2a"/>
<rect x="1739.50" y="171.8" width="20.50" height="14.80" fill="#c0e4f5"/>
<rect x="1743.25" y="176.85" width="13" height="2.5" rx="0.6" fill="#2a2a2a"/>
<rect x="1762.00" y="171.8" width="20.60" height="14.80" fill="#c0e4f5"/>
<rect x="1765.80" y="176.85" width="13" height="2.5" rx="0.6" fill="#2a2a2a"/>
<rect x="1784.80" y="171.8" width="20.20" height="14.80" fill="#c0e4f5"/>
<rect x="1788.40" y="176.85" width="13" height="2.5" rx="0.6" fill="#2a2a2a"/>
<rect x="1807.30" y="171.8" width="22.70" height="14.80" fill="#c0e4f5"/>
<rect x="1812.15" y="176.85" width="13" height="2.5" rx="0.6" fill="#2a2a2a"/>
<rect x="1715.00" y="188.8" width="22.30" height="14.80" fill="#83cbeb"/>
<rect x="1719.65" y="193.75" width="13" height="2.5" rx="0.6" fill="#2a2a2a"/>
<rect x="1739.50" y="188.8" width="20.50" height="14.80" fill="#83cbeb"/>
<rect x="1743.25" y="193.75" width="13" height="2.5" rx="0.6" fill="#2a2a2a"/>
<rect x="1762.00" y="188.8" width="20.60" height="14.80" fill="#83cbeb"/>
<rect x="1765.80" y="193.75" width="13" height="2.5" rx="0.6" fill="#2a2a2a"/>
<rect x="1784.80" y="188.8" width="20.20" height="14.80" fill="#83cbeb"/>
<rect x="1788.40" y="193.75" width="13" height="2.5" rx="0.6" fill="#2a2a2a"/>
<rect x="1807.30" y="188.8" width="22.70" height="14.80" fill="#83cbeb"/>
<rect x="1812.15" y="193.75" width="13" height="2.5" rx="0.6" fill="#2a2a2a"/>
<rect x="1715.00" y="205.8" width="22.30" height="16.80" fill="#c0e4f5"/>
<rect x="1719.65" y="210.95" width="13" height="2.5" rx="0.6" fill="#2a2a2a"/>
<rect x="1739.50" y="205.8" width="20.50" height="16.80" fill="#c0e4f5"/>
<rect x="1743.25" y="210.95" width="13" height="2.5" rx="0.6" fill="#2a2a2a"/>
<rect x="1762.00" y="205.8" width="20.60" height="16.80" fill="#c0e4f5"/>
<rect x="1765.80" y="210.95" width="13" height="2.5" rx="0.6" fill="#2a2a2a"/>
<rect x="1784.80" y="205.8" width="20.20" height="16.80" fill="#c0e4f5"/>
<rect x="1788.40" y="210.95" width="13" height="2.5" rx="0.6" fill="#2a2a2a"/>
<rect x="1807.30" y="205.8" width="22.70" height="16.80" fill="#c0e4f5"/>
<rect x="1812.15" y="210.95" width="13" height="2.5" rx="0.6" fill="#2a2a2a"/>
<rect x="1849.00" y="136" width="22.30" height="16.60" fill="#e97132"/>
<rect x="1853.65" y="142.95" width="13" height="2.5" rx="0.6" fill="#ffffff"/>
<rect x="1873.50" y="136" width="20.50" height="16.60" fill="#e97132"/>
<rect x="1877.25" y="142.95" width="13" height="2.5" rx="0.6" fill="#ffffff"/>
<rect x="1896.00" y="136" width="20.60" height="16.60" fill="#e97132"/>
<rect x="1899.80" y="142.95" width="13" height="2.5" rx="0.6" fill="#ffffff"/>
<rect x="1918.80" y="136" width="20.20" height="16.60" fill="#e97132"/>
<rect x="1922.40" y="142.95" width="13" height="2.5" rx="0.6" fill="#ffffff"/>
<rect x="1941.30" y="136" width="22.70" height="16.60" fill="#e97132"/>
<rect x="1946.15" y="142.95" width="13" height="2.5" rx="0.6" fill="#ffffff"/>
<rect x="1849.00" y="154.8" width="22.30" height="14.80" fill="#f7c7ac"/>
<rect x="1853.65" y="160.15" width="13" height="2.5" rx="0.6" fill="#2a2a2a"/>
<rect x="1873.50" y="154.8" width="20.50" height="14.80" fill="#f7c7ac"/>
<rect x="1877.25" y="160.15" width="13" height="2.5" rx="0.6" fill="#2a2a2a"/>
<rect x="1896.00" y="154.8" width="20.60" height="14.80" fill="#f7c7ac"/>
<rect x="1899.80" y="160.15" width="13" height="2.5" rx="0.6" fill="#2a2a2a"/>
<rect x="1918.80" y="154.8" width="20.20" height="14.80" fill="#f7c7ac"/>
<rect x="1922.40" y="160.15" width="13" height="2.5" rx="0.6" fill="#2a2a2a"/>
<rect x="1941.30" y="154.8" width="22.70" height="14.80" fill="#f7c7ac"/>
<rect x="1946.15" y="160.15" width="13" height="2.5" rx="0.6" fill="#2a2a2a"/>
<rect x="1849.00" y="171.8" width="22.30" height="14.80" fill="#fbe2d5"/>
<rect x="1853.65" y="176.85" width="13" height="2.5" rx="0.6" fill="#2a2a2a"/>
<rect x="1873.50" y="171.8" width="20.50" height="14.80" fill="#fbe2d5"/>
<rect x="1877.25" y="176.85" width="13" height="2.5" rx="0.6" fill="#2a2a2a"/>
<rect x="1896.00" y="171.8" width="20.60" height="14.80" fill="#fbe2d5"/>
<rect x="1899.80" y="176.85" width="13" height="2.5" rx="0.6" fill="#2a2a2a"/>
<rect x="1918.80" y="171.8" width="20.20" height="14.80" fill="#fbe2d5"/>
<rect x="1922.40" y="176.85" width="13" height="2.5" rx="0.6" fill="#2a2a2a"/>
<rect x="1941.30" y="171.8" width="22.70" height="14.80" fill="#fbe2d5"/>
<rect x="1946.15" y="176.85" width="13" height="2.5" rx="0.6" fill="#2a2a2a"/>
<rect x="1849.00" y="188.8" width="22.30" height="14.80" fill="#f7c7ac"/>
<rect x="1853.65" y="193.75" width="13" height="2.5" rx="0.6" fill="#2a2a2a"/>
<rect x="1873.50" y="188.8" width="20.50" height="14.80" fill="#f7c7ac"/>
<rect x="1877.25" y="193.75" width="13" height="2.5" rx="0.6" fill="#2a2a2a"/>
<rect x="1896.00" y="188.8" width="20.60" height="14.80" fill="#f7c7ac"/>
<rect x="1899.80" y="193.75" width="13" height="2.5" rx="0.6" fill="#2a2a2a"/>
<rect x="1918.80" y="188.8" width="20.20" height="14.80" fill="#f7c7ac"/>
<rect x="1922.40" y="193.75" width="13" height="2.5" rx="0.6" fill="#2a2a2a"/>
<rect x="1941.30" y="188.8" width="22.70" height="14.80" fill="#f7c7ac"/>
<rect x="1946.15" y="193.75" width="13" height="2.5" rx="0.6" fill="#2a2a2a"/>
<rect x="1849.00" y="205.8" width="22.30" height="16.80" fill="#fbe2d5"/>
<rect x="1853.65" y="210.95" width="13" height="2.5" rx="0.6" fill="#2a2a2a"/>
<rect x="1873.50" y="205.8" width="20.50" height="16.80" fill="#fbe2d5"/>
<rect x="1877.25" y="210.95" width="13" height="2.5" rx="0.6" fill="#2a2a2a"/>
<rect x="1896.00" y="205.8" width="20.60" height="16.80" fill="#fbe2d5"/>
<rect x="1899.80" y="210.95" width="13" height="2.5" rx="0.6" fill="#2a2a2a"/>
<rect x="1918.80" y="205.8" width="20.20" height="16.80" fill="#fbe2d5"/>
<rect x="1922.40" y="210.95" width="13" height="2.5" rx="0.6" fill="#2a2a2a"/>
<rect x="1941.30" y="205.8" width="22.70" height="16.80" fill="#fbe2d5"/>
<rect x="1946.15" y="210.95" width="13" height="2.5" rx="0.6" fill="#2a2a2a"/>
<rect x="1983.00" y="136" width="22.30" height="16.60" fill="#196b24"/>
<rect x="1987.65" y="142.95" width="13" height="2.5" rx="0.6" fill="#ffffff"/>
<rect x="2007.50" y="136" width="20.50" height="16.60" fill="#196b24"/>
<rect x="2011.25" y="142.95" width="13" height="2.5" rx="0.6" fill="#ffffff"/>
<rect x="2030.00" y="136" width="20.60" height="16.60" fill="#196b24"/>
<rect x="2033.80" y="142.95" width="13" height="2.5" rx="0.6" fill="#ffffff"/>
<rect x="2052.80" y="136" width="20.20" height="16.60" fill="#196b24"/>
<rect x="2056.40" y="142.95" width="13" height="2.5" rx="0.6" fill="#ffffff"/>
<rect x="2075.30" y="136" width="22.70" height="16.60" fill="#196b24"/>
<rect x="2080.15" y="142.95" width="13" height="2.5" rx="0.6" fill="#ffffff"/>
<rect x="1983.00" y="154.8" width="22.30" height="14.80" fill="#84e291"/>
<rect x="1987.65" y="160.15" width="13" height="2.5" rx="0.6" fill="#2a2a2a"/>
<rect x="2007.50" y="154.8" width="20.50" height="14.80" fill="#84e291"/>
<rect x="2011.25" y="160.15" width="13" height="2.5" rx="0.6" fill="#2a2a2a"/>
<rect x="2030.00" y="154.8" width="20.60" height="14.80" fill="#84e291"/>
<rect x="2033.80" y="160.15" width="13" height="2.5" rx="0.6" fill="#2a2a2a"/>
<rect x="2052.80" y="154.8" width="20.20" height="14.80" fill="#84e291"/>
<rect x="2056.40" y="160.15" width="13" height="2.5" rx="0.6" fill="#2a2a2a"/>
<rect x="2075.30" y="154.8" width="22.70" height="14.80" fill="#84e291"/>
<rect x="2080.15" y="160.15" width="13" height="2.5" rx="0.6" fill="#2a2a2a"/>
<rect x="1983.00" y="171.8" width="22.30" height="14.80" fill="#c1f0c7"/>
<rect x="1987.65" y="176.85" width="13" height="2.5" rx="0.6" fill="#2a2a2a"/>
<rect x="2007.50" y="171.8" width="20.50" height="14.80" fill="#c1f0c7"/>
<rect x="2011.25" y="176.85" width="13" height="2.5" rx="0.6" fill="#2a2a2a"/>
<rect x="2030.00" y="171.8" width="20.60" height="14.80" fill="#c1f0c7"/>
<rect x="2033.80" y="176.85" width="13" height="2.5" rx="0.6" fill="#2a2a2a"/>
<rect x="2052.80" y="171.8" width="20.20" height="14.80" fill="#c1f0c7"/>
<rect x="2056.40" y="176.85" width="13" height="2.5" rx="0.6" fill="#2a2a2a"/>
<rect x="2075.30" y="171.8" width="22.70" height="14.80" fill="#c1f0c7"/>
<rect x="2080.15" y="176.85" width="13" height="2.5" rx="0.6" fill="#2a2a2a"/>
<rect x="1983.00" y="188.8" width="22.30" height="14.80" fill="#84e291"/>
<rect x="1987.65" y="193.75" width="13" height="2.5" rx="0.6" fill="#2a2a2a"/>
<rect x="2007.50" y="188.8" width="20.50" height="14.80" fill="#84e291"/>
<rect x="2011.25" y="193.75" width="13" height="2.5" rx="0.6" fill="#2a2a2a"/>
<rect x="2030.00" y="188.8" width="20.60" height="14.80" fill="#84e291"/>
<rect x="2033.80" y="193.75" width="13" height="2.5" rx="0.6" fill="#2a2a2a"/>
<rect x="2052.80" y="188.8" width="20.20" height="14.80" fill="#84e291"/>
<rect x="2056.40" y="193.75" width="13" height="2.5" rx="0.6" fill="#2a2a2a"/>
<rect x="2075.30" y="188.8" width="22.70" height="14.80" fill="#84e291"/>
<rect x="2080.15" y="193.75" width="13" height="2.5" rx="0.6" fill="#2a2a2a"/>
<rect x="1983.00" y="205.8" width="22.30" height="16.80" fill="#c1f0c7"/>
<rect x="1987.65" y="210.95" width="13" height="2.5" rx="0.6" fill="#2a2a2a"/>
<rect x="2007.50" y="205.8" width="20.50" height="16.80" fill="#c1f0c7"/>
<rect x="2011.25" y="210.95" width="13" height="2.5" rx="0.6" fill="#2a2a2a"/>
<rect x="2030.00" y="205.8" width="20.60" height="16.80" fill="#c1f0c7"/>
<rect x="2033.80" y="210.95" width="13" height="2.5" rx="0.6" fill="#2a2a2a"/>
<rect x="2052.80" y="205.8" width="20.20" height="16.80" fill="#c1f0c7"/>
<rect x="2056.40" y="210.95" width="13" height="2.5" rx="0.6" fill="#2a2a2a"/>
<rect x="2075.30" y="205.8" width="22.70" height="16.80" fill="#c1f0c7"/>
<rect x="2080.15" y="210.95" width="13" height="2.5" rx="0.6" fill="#2a2a2a"/>
</svg>

</body></html>
